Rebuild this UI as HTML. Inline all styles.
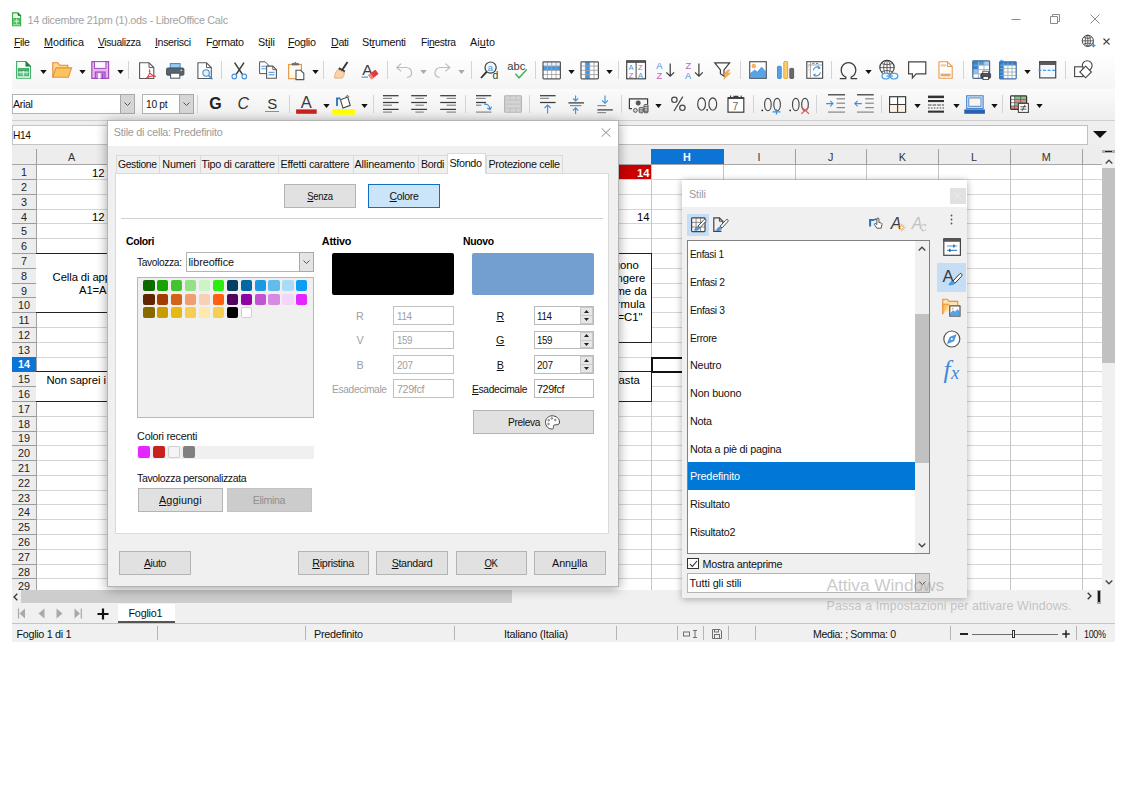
<!DOCTYPE html>
<html lang="it"><head><meta charset="utf-8"><title>LibreOffice Calc</title>
<style>
html,body{margin:0;padding:0;background:#fff;}
body{width:1122px;height:793px;position:relative;overflow:hidden;font-family:"Liberation Sans", sans-serif;font-size:10px;}
#root{position:absolute;left:0;top:0;width:1122px;height:793px;overflow:hidden;}
#root div,#root svg,#root span.t{position:absolute;box-sizing:border-box;}
span.t{white-space:pre;}
u{text-decoration:underline;text-underline-offset:1px;}
</style></head>
<body><div id="root">
<div style="left:12.00px;top:10.00px;width:1102.50px;height:42.00px;background:#fff;"></div>
<span class="t" id="t0" style="top:12.90px;font-size:10.8px;line-height:14px;color:#a3a3a3;letter-spacing:-0.279px;left:27.60px;">14 dicembre 21pm (1).ods - LibreOffice Calc</span>
<svg style="left:1010.00px;top:12.00px;" width="92.00" height="14.00" viewBox="0 0 92 14"><path d="M1.5 7.5h9" stroke="#8a8a8a" stroke-width="1" fill="none"/><path d="M40.5 4.5h7v7h-7z M42.5 4.5v-2h7v7h-2" stroke="#8a8a8a" stroke-width="1" fill="none"/><path d="M80.5 2.5l9 9 M89.5 2.5l-9 9" stroke="#8a8a8a" stroke-width="1" fill="none"/></svg>
<span class="t" id="t1" style="top:34.50px;font-size:10.8px;line-height:14px;color:#111;letter-spacing:-0.350px;left:14.00px;transform-origin:0 50%;transform:scaleX(0.9773);"><u>F</u>ile</span>
<span class="t" id="t2" style="top:34.50px;font-size:10.8px;line-height:14px;color:#111;letter-spacing:-0.031px;left:44.00px;"><u>M</u>odifica</span>
<span class="t" id="t3" style="top:34.50px;font-size:10.8px;line-height:14px;color:#111;letter-spacing:-0.350px;left:98.00px;transform-origin:0 50%;transform:scaleX(0.9498);"><u>V</u>isualizza</span>
<span class="t" id="t4" style="top:34.50px;font-size:10.8px;line-height:14px;color:#111;letter-spacing:-0.350px;left:155.00px;transform-origin:0 50%;transform:scaleX(0.9780);"><u>I</u>nserisci</span>
<span class="t" id="t5" style="top:34.50px;font-size:10.8px;line-height:14px;color:#111;letter-spacing:-0.350px;left:206.00px;transform-origin:0 50%;transform:scaleX(0.9965);">F<u>o</u>rmato</span>
<span class="t" id="t6" style="top:34.50px;font-size:10.8px;line-height:14px;color:#111;letter-spacing:-0.105px;left:258.00px;">St<u>i</u>li</span>
<span class="t" id="t7" style="top:34.50px;font-size:10.8px;line-height:14px;color:#111;letter-spacing:-0.284px;left:288.00px;"><u>F</u>oglio</span>
<span class="t" id="t8" style="top:34.50px;font-size:10.8px;line-height:14px;color:#111;letter-spacing:-0.350px;left:331.00px;transform-origin:0 50%;transform:scaleX(0.9907);"><u>D</u>ati</span>
<span class="t" id="t9" style="top:34.50px;font-size:10.8px;line-height:14px;color:#111;letter-spacing:-0.279px;left:362.00px;">St<u>r</u>umenti</span>
<span class="t" id="t10" style="top:34.50px;font-size:10.8px;line-height:14px;color:#111;letter-spacing:-0.350px;left:421.00px;transform-origin:0 50%;transform:scaleX(0.9568);">Fi<u>n</u>estra</span>
<span class="t" id="t11" style="top:34.50px;font-size:10.8px;line-height:14px;color:#111;letter-spacing:0.090px;left:470.00px;">Ai<u>u</u>to</span>
<div style="left:12.00px;top:52.00px;width:1102.50px;height:37.00px;background:linear-gradient(#ffffff,#f5f5f5);"></div>
<div style="left:12.00px;top:89.00px;width:1102.50px;height:31.50px;background:linear-gradient(#fbfbfb,#eeeeee);"></div>
<div style="left:12.00px;top:120.00px;width:1102.50px;height:1.00px;background:#cfcfcf;"></div>
<div style="left:12.00px;top:121.00px;width:1102.50px;height:27.50px;background:#efefef;"></div>
<div style="left:128.00px;top:61.00px;width:1.00px;height:18.00px;background:#d4d4d4;"></div>
<div style="left:221.00px;top:61.00px;width:1.00px;height:18.00px;background:#d4d4d4;"></div>
<div style="left:323.00px;top:61.00px;width:1.00px;height:18.00px;background:#d4d4d4;"></div>
<div style="left:387.00px;top:61.00px;width:1.00px;height:18.00px;background:#d4d4d4;"></div>
<div style="left:471.00px;top:61.00px;width:1.00px;height:18.00px;background:#d4d4d4;"></div>
<div style="left:535.00px;top:61.00px;width:1.00px;height:18.00px;background:#d4d4d4;"></div>
<div style="left:617.50px;top:61.00px;width:1.00px;height:18.00px;background:#d4d4d4;"></div>
<div style="left:739.50px;top:61.00px;width:1.00px;height:18.00px;background:#d4d4d4;"></div>
<div style="left:831.00px;top:61.00px;width:1.00px;height:18.00px;background:#d4d4d4;"></div>
<div style="left:962.50px;top:61.00px;width:1.00px;height:18.00px;background:#d4d4d4;"></div>
<div style="left:1065.00px;top:61.00px;width:1.00px;height:18.00px;background:#d4d4d4;"></div>
<div style="left:196.50px;top:95.00px;width:1.00px;height:18.00px;background:#d4d4d4;"></div>
<div style="left:289.00px;top:95.00px;width:1.00px;height:18.00px;background:#d4d4d4;"></div>
<div style="left:372.50px;top:95.00px;width:1.00px;height:18.00px;background:#d4d4d4;"></div>
<div style="left:464.70px;top:95.00px;width:1.00px;height:18.00px;background:#d4d4d4;"></div>
<div style="left:529.00px;top:95.00px;width:1.00px;height:18.00px;background:#d4d4d4;"></div>
<div style="left:621.30px;top:95.00px;width:1.00px;height:18.00px;background:#d4d4d4;"></div>
<div style="left:752.70px;top:95.00px;width:1.00px;height:18.00px;background:#d4d4d4;"></div>
<div style="left:816.30px;top:95.00px;width:1.00px;height:18.00px;background:#d4d4d4;"></div>
<div style="left:880.60px;top:95.00px;width:1.00px;height:18.00px;background:#d4d4d4;"></div>
<div style="left:1002.30px;top:95.00px;width:1.00px;height:18.00px;background:#d4d4d4;"></div>
<svg style="left:40.00px;top:69.70px;" width="7.00" height="4.00" viewBox="0 0 7 4"><path d="M0.3 0h6.4L3.5 4z" fill="#111"/></svg>
<svg style="left:78.50px;top:69.70px;" width="7.00" height="4.00" viewBox="0 0 7 4"><path d="M0.3 0h6.4L3.5 4z" fill="#111"/></svg>
<svg style="left:116.50px;top:69.70px;" width="7.00" height="4.00" viewBox="0 0 7 4"><path d="M0.3 0h6.4L3.5 4z" fill="#111"/></svg>
<svg style="left:311.50px;top:69.70px;" width="7.00" height="4.00" viewBox="0 0 7 4"><path d="M0.3 0h6.4L3.5 4z" fill="#111"/></svg>
<svg style="left:568.00px;top:69.70px;" width="7.00" height="4.00" viewBox="0 0 7 4"><path d="M0.3 0h6.4L3.5 4z" fill="#111"/></svg>
<svg style="left:605.90px;top:69.70px;" width="7.00" height="4.00" viewBox="0 0 7 4"><path d="M0.3 0h6.4L3.5 4z" fill="#111"/></svg>
<svg style="left:865.10px;top:69.70px;" width="7.00" height="4.00" viewBox="0 0 7 4"><path d="M0.3 0h6.4L3.5 4z" fill="#111"/></svg>
<svg style="left:1024.30px;top:69.70px;" width="7.00" height="4.00" viewBox="0 0 7 4"><path d="M0.3 0h6.4L3.5 4z" fill="#111"/></svg>
<svg style="left:420.20px;top:69.50px;" width="7.00" height="4.00" viewBox="0 0 7 4"><path d="M0.3 0h6.4L3.5 4z" fill="#a8a8a8"/></svg>
<svg style="left:458.20px;top:69.50px;" width="7.00" height="4.00" viewBox="0 0 7 4"><path d="M0.3 0h6.4L3.5 4z" fill="#a8a8a8"/></svg>
<svg style="left:322.50px;top:103.60px;" width="7.00" height="4.00" viewBox="0 0 7 4"><path d="M0.3 0h6.4L3.5 4z" fill="#111"/></svg>
<svg style="left:360.90px;top:103.60px;" width="7.00" height="4.00" viewBox="0 0 7 4"><path d="M0.3 0h6.4L3.5 4z" fill="#111"/></svg>
<svg style="left:655.20px;top:103.60px;" width="7.00" height="4.00" viewBox="0 0 7 4"><path d="M0.3 0h6.4L3.5 4z" fill="#111"/></svg>
<svg style="left:914.00px;top:103.60px;" width="7.00" height="4.00" viewBox="0 0 7 4"><path d="M0.3 0h6.4L3.5 4z" fill="#111"/></svg>
<svg style="left:952.50px;top:103.60px;" width="7.00" height="4.00" viewBox="0 0 7 4"><path d="M0.3 0h6.4L3.5 4z" fill="#111"/></svg>
<svg style="left:990.90px;top:103.60px;" width="7.00" height="4.00" viewBox="0 0 7 4"><path d="M0.3 0h6.4L3.5 4z" fill="#111"/></svg>
<svg style="left:1035.80px;top:103.60px;" width="7.00" height="4.00" viewBox="0 0 7 4"><path d="M0.3 0h6.4L3.5 4z" fill="#111"/></svg>
<div style="left:12.00px;top:93.50px;width:123.00px;height:20.00px;background:#fff;border:1px solid #b4b4b4;"></div>
<div style="left:120.00px;top:93.50px;width:15.00px;height:20.00px;background:#d6d6d6;border:1px solid #a8a8a8;"></div>
<svg style="left:124.00px;top:101.50px;" width="7.00" height="4.50" viewBox="0 0 7 4.5"><path d="M0.5 0.5L3.5 3.5L6.5 0.5" stroke="#555" stroke-width="1" fill="none"/></svg>
<div style="left:142.00px;top:93.50px;width:51.50px;height:20.00px;background:#fff;border:1px solid #b4b4b4;"></div>
<div style="left:178.50px;top:93.50px;width:15.00px;height:20.00px;background:#d6d6d6;border:1px solid #a8a8a8;"></div>
<svg style="left:182.50px;top:101.50px;" width="7.00" height="4.50" viewBox="0 0 7 4.5"><path d="M0.5 0.5L3.5 3.5L6.5 0.5" stroke="#555" stroke-width="1" fill="none"/></svg>
<span class="t" id="t12" style="top:96.60px;font-size:10.8px;line-height:14px;color:#111;letter-spacing:-0.350px;left:13.40px;transform-origin:0 50%;transform:scaleX(0.9896);">Arial</span>
<span class="t" id="t13" style="top:96.60px;font-size:10.8px;line-height:14px;color:#111;letter-spacing:-0.350px;left:146.00px;transform-origin:0 50%;transform:scaleX(0.9507);">10 pt</span>
<span class="t" id="t14" style="top:94.90px;font-size:16px;line-height:18px;color:#222;font-weight:bold;left:209.30px;">G</span>
<span class="t" id="t15" style="top:94.90px;font-size:16px;line-height:18px;color:#333;font-style:italic;left:237.40px;">C</span>
<span class="t" id="t16" style="top:94.50px;font-size:15px;line-height:18px;color:#333;left:267.20px;">S</span>
<div style="left:265.20px;top:110.70px;width:13.80px;height:1.20px;background:#5a9bd8;"></div>
<div style="left:12.00px;top:125.00px;width:96.00px;height:19.50px;background:#fff;border:1px solid #c4c4c4;"></div>
<span class="t" id="t17" style="top:127.50px;font-size:10.8px;line-height:14px;color:#111;letter-spacing:-0.350px;left:13.40px;transform-origin:0 50%;transform:scaleX(0.9418);">H14</span>
<div style="left:560.00px;top:125.00px;width:527.50px;height:19.50px;background:#fff;border:1px solid #c0c0c0;"></div>
<svg style="left:1093.00px;top:131.00px;" width="14.00" height="7.00" viewBox="0 0 14 7"><path d="M0 0h14L7 7z" fill="#111"/></svg>
<div style="left:12.00px;top:164.80px;width:1090.00px;height:425.20px;background:#fff;"></div>
<div style="left:12.00px;top:144.50px;width:1090.00px;height:20.30px;background:#ededed;"></div>
<div style="left:12.00px;top:164.80px;width:24.00px;height:425.20px;background:#ededed;"></div>
<div style="left:36.00px;top:179.09px;width:1066.00px;height:1.00px;background:#d6d6d6;"></div>
<div style="left:36.00px;top:193.88px;width:1066.00px;height:1.00px;background:#d6d6d6;"></div>
<div style="left:36.00px;top:208.67px;width:1066.00px;height:1.00px;background:#d6d6d6;"></div>
<div style="left:36.00px;top:223.46px;width:1066.00px;height:1.00px;background:#d6d6d6;"></div>
<div style="left:36.00px;top:238.25px;width:1066.00px;height:1.00px;background:#d6d6d6;"></div>
<div style="left:36.00px;top:253.04px;width:1066.00px;height:1.00px;background:#d6d6d6;"></div>
<div style="left:36.00px;top:267.83px;width:1066.00px;height:1.00px;background:#d6d6d6;"></div>
<div style="left:36.00px;top:282.62px;width:1066.00px;height:1.00px;background:#d6d6d6;"></div>
<div style="left:36.00px;top:297.41px;width:1066.00px;height:1.00px;background:#d6d6d6;"></div>
<div style="left:36.00px;top:312.20px;width:1066.00px;height:1.00px;background:#d6d6d6;"></div>
<div style="left:36.00px;top:326.99px;width:1066.00px;height:1.00px;background:#d6d6d6;"></div>
<div style="left:36.00px;top:341.78px;width:1066.00px;height:1.00px;background:#d6d6d6;"></div>
<div style="left:36.00px;top:356.57px;width:1066.00px;height:1.00px;background:#d6d6d6;"></div>
<div style="left:36.00px;top:371.36px;width:1066.00px;height:1.00px;background:#d6d6d6;"></div>
<div style="left:36.00px;top:386.15px;width:1066.00px;height:1.00px;background:#d6d6d6;"></div>
<div style="left:36.00px;top:400.94px;width:1066.00px;height:1.00px;background:#d6d6d6;"></div>
<div style="left:36.00px;top:415.73px;width:1066.00px;height:1.00px;background:#d6d6d6;"></div>
<div style="left:36.00px;top:430.52px;width:1066.00px;height:1.00px;background:#d6d6d6;"></div>
<div style="left:36.00px;top:445.31px;width:1066.00px;height:1.00px;background:#d6d6d6;"></div>
<div style="left:36.00px;top:460.10px;width:1066.00px;height:1.00px;background:#d6d6d6;"></div>
<div style="left:36.00px;top:474.89px;width:1066.00px;height:1.00px;background:#d6d6d6;"></div>
<div style="left:36.00px;top:489.68px;width:1066.00px;height:1.00px;background:#d6d6d6;"></div>
<div style="left:36.00px;top:504.47px;width:1066.00px;height:1.00px;background:#d6d6d6;"></div>
<div style="left:36.00px;top:519.26px;width:1066.00px;height:1.00px;background:#d6d6d6;"></div>
<div style="left:36.00px;top:534.05px;width:1066.00px;height:1.00px;background:#d6d6d6;"></div>
<div style="left:36.00px;top:548.84px;width:1066.00px;height:1.00px;background:#d6d6d6;"></div>
<div style="left:36.00px;top:563.63px;width:1066.00px;height:1.00px;background:#d6d6d6;"></div>
<div style="left:36.00px;top:578.42px;width:1066.00px;height:1.00px;background:#d6d6d6;"></div>
<div style="left:650.50px;top:164.80px;width:1.00px;height:425.20px;background:#c6c6c6;"></div>
<div style="left:722.50px;top:164.80px;width:1.00px;height:425.20px;background:#c6c6c6;"></div>
<div style="left:794.50px;top:164.80px;width:1.00px;height:425.20px;background:#c6c6c6;"></div>
<div style="left:866.00px;top:164.80px;width:1.00px;height:425.20px;background:#c6c6c6;"></div>
<div style="left:937.50px;top:164.80px;width:1.00px;height:425.20px;background:#c6c6c6;"></div>
<div style="left:1009.50px;top:164.80px;width:1.00px;height:425.20px;background:#c6c6c6;"></div>
<div style="left:1082.00px;top:164.80px;width:1.00px;height:425.20px;background:#c6c6c6;"></div>
<div style="left:12.00px;top:163.60px;width:1090.00px;height:1.70px;background:#a6a6a6;"></div>
<div style="left:35.50px;top:148.50px;width:1.00px;height:441.50px;background:#a0a0a0;"></div>
<div style="left:12.00px;top:179.09px;width:24.00px;height:1.00px;background:#9c9c9c;"></div>
<div style="left:12.00px;top:193.88px;width:24.00px;height:1.00px;background:#9c9c9c;"></div>
<div style="left:12.00px;top:208.67px;width:24.00px;height:1.00px;background:#9c9c9c;"></div>
<div style="left:12.00px;top:223.46px;width:24.00px;height:1.00px;background:#9c9c9c;"></div>
<div style="left:12.00px;top:238.25px;width:24.00px;height:1.00px;background:#9c9c9c;"></div>
<div style="left:12.00px;top:253.04px;width:24.00px;height:1.00px;background:#9c9c9c;"></div>
<div style="left:12.00px;top:267.83px;width:24.00px;height:1.00px;background:#9c9c9c;"></div>
<div style="left:12.00px;top:282.62px;width:24.00px;height:1.00px;background:#9c9c9c;"></div>
<div style="left:12.00px;top:297.41px;width:24.00px;height:1.00px;background:#9c9c9c;"></div>
<div style="left:12.00px;top:312.20px;width:24.00px;height:1.00px;background:#9c9c9c;"></div>
<div style="left:12.00px;top:326.99px;width:24.00px;height:1.00px;background:#9c9c9c;"></div>
<div style="left:12.00px;top:341.78px;width:24.00px;height:1.00px;background:#9c9c9c;"></div>
<div style="left:12.00px;top:356.57px;width:24.00px;height:1.00px;background:#9c9c9c;"></div>
<div style="left:12.00px;top:371.36px;width:24.00px;height:1.00px;background:#9c9c9c;"></div>
<div style="left:12.00px;top:386.15px;width:24.00px;height:1.00px;background:#9c9c9c;"></div>
<div style="left:12.00px;top:400.94px;width:24.00px;height:1.00px;background:#9c9c9c;"></div>
<div style="left:12.00px;top:415.73px;width:24.00px;height:1.00px;background:#9c9c9c;"></div>
<div style="left:12.00px;top:430.52px;width:24.00px;height:1.00px;background:#9c9c9c;"></div>
<div style="left:12.00px;top:445.31px;width:24.00px;height:1.00px;background:#9c9c9c;"></div>
<div style="left:12.00px;top:460.10px;width:24.00px;height:1.00px;background:#9c9c9c;"></div>
<div style="left:12.00px;top:474.89px;width:24.00px;height:1.00px;background:#9c9c9c;"></div>
<div style="left:12.00px;top:489.68px;width:24.00px;height:1.00px;background:#9c9c9c;"></div>
<div style="left:12.00px;top:504.47px;width:24.00px;height:1.00px;background:#9c9c9c;"></div>
<div style="left:12.00px;top:519.26px;width:24.00px;height:1.00px;background:#9c9c9c;"></div>
<div style="left:12.00px;top:534.05px;width:24.00px;height:1.00px;background:#9c9c9c;"></div>
<div style="left:12.00px;top:548.84px;width:24.00px;height:1.00px;background:#9c9c9c;"></div>
<div style="left:12.00px;top:563.63px;width:24.00px;height:1.00px;background:#9c9c9c;"></div>
<div style="left:12.00px;top:578.42px;width:24.00px;height:1.00px;background:#9c9c9c;"></div>
<div style="left:650.50px;top:148.50px;width:1.00px;height:16.30px;background:#a0a0a0;"></div>
<div style="left:722.50px;top:148.50px;width:1.00px;height:16.30px;background:#a0a0a0;"></div>
<div style="left:794.50px;top:148.50px;width:1.00px;height:16.30px;background:#a0a0a0;"></div>
<div style="left:866.00px;top:148.50px;width:1.00px;height:16.30px;background:#a0a0a0;"></div>
<div style="left:937.50px;top:148.50px;width:1.00px;height:16.30px;background:#a0a0a0;"></div>
<div style="left:1009.50px;top:148.50px;width:1.00px;height:16.30px;background:#a0a0a0;"></div>
<div style="left:1082.00px;top:148.50px;width:1.00px;height:16.30px;background:#a0a0a0;"></div>
<div style="left:107.00px;top:148.50px;width:1.00px;height:16.30px;background:#a0a0a0;"></div>
<div style="left:651.00px;top:148.50px;width:72.50px;height:15.80px;background:#0b74d4;"></div>
<span class="t" id="t18" style="top:150.00px;font-size:10.8px;line-height:14px;color:#fff;font-weight:bold;left:687.00px;transform:translateX(-50%);">H</span>
<span class="t" id="t19" style="top:150.00px;font-size:10.8px;line-height:14px;color:#333;left:759.00px;transform:translateX(-50%);">I</span>
<span class="t" id="t20" style="top:150.00px;font-size:10.8px;line-height:14px;color:#333;left:830.75px;transform:translateX(-50%);">J</span>
<span class="t" id="t21" style="top:150.00px;font-size:10.8px;line-height:14px;color:#333;left:902.25px;transform:translateX(-50%);">K</span>
<span class="t" id="t22" style="top:150.00px;font-size:10.8px;line-height:14px;color:#333;left:974.00px;transform:translateX(-50%);">L</span>
<span class="t" id="t23" style="top:150.00px;font-size:10.8px;line-height:14px;color:#333;left:1046.25px;transform:translateX(-50%);">M</span>
<span class="t" id="t24" style="top:150.00px;font-size:10.8px;line-height:14px;color:#333;left:71.50px;transform:translateX(-50%);">A</span>
<div style="left:12.00px;top:357.07px;width:23.50px;height:14.79px;background:#0b74d4;"></div>
<span class="t" id="t25" style="top:165.20px;font-size:10.8px;line-height:14px;color:#222;left:24.00px;transform:translateX(-50%);">1</span>
<span class="t" id="t26" style="top:179.99px;font-size:10.8px;line-height:14px;color:#222;left:24.00px;transform:translateX(-50%);">2</span>
<span class="t" id="t27" style="top:194.78px;font-size:10.8px;line-height:14px;color:#222;left:24.00px;transform:translateX(-50%);">3</span>
<span class="t" id="t28" style="top:209.57px;font-size:10.8px;line-height:14px;color:#222;left:24.00px;transform:translateX(-50%);">4</span>
<span class="t" id="t29" style="top:224.36px;font-size:10.8px;line-height:14px;color:#222;left:24.00px;transform:translateX(-50%);">5</span>
<span class="t" id="t30" style="top:239.15px;font-size:10.8px;line-height:14px;color:#222;left:24.00px;transform:translateX(-50%);">6</span>
<span class="t" id="t31" style="top:253.94px;font-size:10.8px;line-height:14px;color:#222;left:24.00px;transform:translateX(-50%);">7</span>
<span class="t" id="t32" style="top:268.73px;font-size:10.8px;line-height:14px;color:#222;left:24.00px;transform:translateX(-50%);">8</span>
<span class="t" id="t33" style="top:283.51px;font-size:10.8px;line-height:14px;color:#222;left:24.00px;transform:translateX(-50%);">9</span>
<span class="t" id="t34" style="top:298.30px;font-size:10.8px;line-height:14px;color:#222;left:24.00px;transform:translateX(-50%);">10</span>
<span class="t" id="t35" style="top:313.09px;font-size:10.8px;line-height:14px;color:#222;left:24.00px;transform:translateX(-50%);">11</span>
<span class="t" id="t36" style="top:327.88px;font-size:10.8px;line-height:14px;color:#222;left:24.00px;transform:translateX(-50%);">12</span>
<span class="t" id="t37" style="top:342.67px;font-size:10.8px;line-height:14px;color:#222;left:24.00px;transform:translateX(-50%);">13</span>
<span class="t" id="t38" style="top:357.46px;font-size:10.8px;line-height:14px;color:#fff;font-weight:bold;left:24.00px;transform:translateX(-50%);">14</span>
<span class="t" id="t39" style="top:372.25px;font-size:10.8px;line-height:14px;color:#222;left:24.00px;transform:translateX(-50%);">15</span>
<span class="t" id="t40" style="top:387.04px;font-size:10.8px;line-height:14px;color:#222;left:24.00px;transform:translateX(-50%);">16</span>
<span class="t" id="t41" style="top:401.83px;font-size:10.8px;line-height:14px;color:#222;left:24.00px;transform:translateX(-50%);">17</span>
<span class="t" id="t42" style="top:416.62px;font-size:10.8px;line-height:14px;color:#222;left:24.00px;transform:translateX(-50%);">18</span>
<span class="t" id="t43" style="top:431.41px;font-size:10.8px;line-height:14px;color:#222;left:24.00px;transform:translateX(-50%);">19</span>
<span class="t" id="t44" style="top:446.20px;font-size:10.8px;line-height:14px;color:#222;left:24.00px;transform:translateX(-50%);">20</span>
<span class="t" id="t45" style="top:460.99px;font-size:10.8px;line-height:14px;color:#222;left:24.00px;transform:translateX(-50%);">21</span>
<span class="t" id="t46" style="top:475.78px;font-size:10.8px;line-height:14px;color:#222;left:24.00px;transform:translateX(-50%);">22</span>
<span class="t" id="t47" style="top:490.57px;font-size:10.8px;line-height:14px;color:#222;left:24.00px;transform:translateX(-50%);">23</span>
<span class="t" id="t48" style="top:505.37px;font-size:10.8px;line-height:14px;color:#222;left:24.00px;transform:translateX(-50%);">24</span>
<span class="t" id="t49" style="top:520.15px;font-size:10.8px;line-height:14px;color:#222;left:24.00px;transform:translateX(-50%);">25</span>
<span class="t" id="t50" style="top:534.94px;font-size:10.8px;line-height:14px;color:#222;left:24.00px;transform:translateX(-50%);">26</span>
<span class="t" id="t51" style="top:549.73px;font-size:10.8px;line-height:14px;color:#222;left:24.00px;transform:translateX(-50%);">27</span>
<span class="t" id="t52" style="top:564.52px;font-size:10.8px;line-height:14px;color:#222;left:24.00px;transform:translateX(-50%);">28</span>
<span class="t" id="t53" style="top:579.32px;font-size:10.8px;line-height:14px;color:#222;left:24.00px;transform:translateX(-50%);">29</span>
<span class="t" id="t54" style="top:165.80px;font-size:11.3px;line-height:14px;color:#000;right:1017.50px;">12</span>
<span class="t" id="t55" style="top:210.17px;font-size:11.3px;line-height:14px;color:#000;right:1017.50px;">12</span>
<div style="left:36.00px;top:253.54px;width:80.00px;height:59.16px;background:#fff;"></div>
<div style="left:36.00px;top:371.86px;width:80.00px;height:29.58px;background:#fff;"></div>
<div style="left:36.00px;top:253.04px;width:80.00px;height:1.00px;background:#222;"></div>
<div style="left:36.00px;top:312.20px;width:80.00px;height:1.00px;background:#222;"></div>
<span class="t" id="t56" style="top:269.50px;font-size:11.3px;line-height:14px;color:#000;letter-spacing:-0.107px;left:52.60px;">Cella di app</span>
<span class="t" id="t57" style="top:282.70px;font-size:11.3px;line-height:14px;color:#000;letter-spacing:-0.151px;left:79.00px;">A1=A</span>
<span class="t" id="t58" style="top:372.70px;font-size:11.3px;line-height:14px;color:#000;letter-spacing:-0.071px;left:46.50px;">Non saprei i</span>
<div style="left:36.00px;top:371.36px;width:80.00px;height:1.00px;background:#222;"></div>
<div style="left:36.00px;top:400.94px;width:80.00px;height:1.00px;background:#222;"></div>
<div style="left:600.00px;top:165.30px;width:50.50px;height:13.79px;background:#cc0000;"></div>
<span class="t" id="t59" style="top:165.80px;font-size:11.3px;line-height:14px;color:#fff;font-weight:bold;right:472.50px;">14</span>
<span class="t" id="t60" style="top:210.17px;font-size:11.3px;line-height:14px;color:#000;right:472.50px;">14</span>
<div style="left:560.00px;top:253.04px;width:91.50px;height:89.74px;background:#fff;border:1px solid #222;border-left:none;"></div>
<span class="t" id="t61" style="top:258.40px;font-size:11.3px;line-height:14px;color:#000;right:483.10px;">gono</span>
<span class="t" id="t62" style="top:271.30px;font-size:11.3px;line-height:14px;color:#000;right:476.60px;">ngere</span>
<span class="t" id="t63" style="top:284.20px;font-size:11.3px;line-height:14px;color:#000;right:475.20px;">me da</span>
<span class="t" id="t64" style="top:297.30px;font-size:11.3px;line-height:14px;color:#000;right:476.90px;">rmula</span>
<span class="t" id="t65" style="top:310.40px;font-size:11.3px;line-height:14px;color:#000;right:479.50px;">=C1"</span>
<div style="left:560.00px;top:371.36px;width:91.50px;height:30.58px;background:#fff;border:1px solid #222;border-left:none;"></div>
<span class="t" id="t66" style="top:373.20px;font-size:11.3px;line-height:14px;color:#000;right:482.20px;">asta</span>
<div style="left:650.50px;top:356.60px;width:73.70px;height:16.00px;border:2px solid #111;"></div>
<div style="left:1102.00px;top:144.50px;width:12.50px;height:445.50px;background:#f0f0f0;"></div>
<div style="left:1102.00px;top:149.50px;width:12.50px;height:3.50px;background:#b0b0b0;"></div>
<div style="left:1105.00px;top:150.70px;width:6.50px;height:1.20px;background:#222;"></div>
<svg style="left:1104.50px;top:158.50px;" width="8.00" height="5.00" viewBox="0 0 8 5"><path d="M0.7 4.5L4 1.2L7.3 4.5" stroke="#444" stroke-width="1.3" fill="none"/></svg>
<div style="left:1102.00px;top:168.00px;width:12.50px;height:195.00px;background:#c1c1c1;"></div>
<svg style="left:1104.50px;top:579.50px;" width="8.00" height="5.00" viewBox="0 0 8 5"><path d="M0.7 0.5L4 3.8L7.3 0.5" stroke="#444" stroke-width="1.3" fill="none"/></svg>
<div style="left:12.00px;top:590.00px;width:1102.50px;height:33.50px;background:#f0f0f0;"></div>
<div style="left:21.00px;top:590.00px;width:491.00px;height:13.00px;background:#cdcdcd;"></div>
<svg style="left:12.50px;top:593.00px;" width="5.00" height="8.00" viewBox="0 0 5 8"><path d="M4.3 0.7L1 4L4.3 7.3" stroke="#333" stroke-width="1.3" fill="none"/></svg>
<svg style="left:1087.00px;top:592.00px;" width="5.00" height="8.00" viewBox="0 0 5 8"><path d="M0.7 0.7L4 4L0.7 7.3" stroke="#333" stroke-width="1.3" fill="none"/></svg>
<div style="left:1096.80px;top:589.60px;width:4.60px;height:14.00px;background:#a8a8a8;"></div>
<div style="left:1098.20px;top:591.00px;width:1.90px;height:11.20px;background:#1a1a1a;"></div>
<svg style="left:17.00px;top:608.00px;" width="66.00" height="11.00" viewBox="0 0 66 11"><path d="M1.5 0.5v10" stroke="#a9a9a9" stroke-width="1.2"/><path d="M8 0.5v10L2.5 5.5z" fill="#a9a9a9"/><path d="M27.5 0.5v10L21.5 5.5z" fill="#a9a9a9"/><path d="M39.5 0.5v10L45.5 5.5z" fill="#a9a9a9"/><path d="M57.5 0.5v10L63 5.5z" fill="#a9a9a9"/><path d="M64.3 0.5v10" stroke="#a9a9a9" stroke-width="1.2"/></svg>
<svg style="left:96.50px;top:608.00px;" width="12.00" height="12.00" viewBox="0 0 12 12"><path d="M6 0.5v11M0.5 6h11" stroke="#111" stroke-width="2.2"/></svg>
<div style="left:118.00px;top:603.50px;width:56.50px;height:19.50px;background:#fff;"></div>
<div style="left:118.00px;top:621.00px;width:56.50px;height:2.00px;background:#555;"></div>
<span class="t" id="t67" style="top:605.80px;font-size:10.8px;line-height:14px;color:#111;letter-spacing:-0.237px;left:128.50px;">Foglio1</span>
<div style="left:12.00px;top:623.00px;width:1102.50px;height:18.50px;background:#f0f0f0;"></div>
<div style="left:12.00px;top:623.00px;width:1102.50px;height:1.00px;background:#c4c4c4;"></div>
<div style="left:157.00px;top:626.00px;width:1.00px;height:14.00px;background:#b5b5b5;"></div>
<div style="left:305.00px;top:626.00px;width:1.00px;height:14.00px;background:#b5b5b5;"></div>
<div style="left:453.80px;top:626.00px;width:1.00px;height:14.00px;background:#b5b5b5;"></div>
<div style="left:616.00px;top:626.00px;width:1.00px;height:14.00px;background:#b5b5b5;"></div>
<div style="left:676.80px;top:626.00px;width:1.00px;height:14.00px;background:#b5b5b5;"></div>
<div style="left:703.00px;top:626.00px;width:1.00px;height:14.00px;background:#b5b5b5;"></div>
<div style="left:728.00px;top:626.00px;width:1.00px;height:14.00px;background:#b5b5b5;"></div>
<div style="left:754.50px;top:626.00px;width:1.00px;height:14.00px;background:#b5b5b5;"></div>
<div style="left:950.00px;top:626.00px;width:1.00px;height:14.00px;background:#b5b5b5;"></div>
<div style="left:1075.60px;top:626.00px;width:1.00px;height:14.00px;background:#b5b5b5;"></div>
<span class="t" id="t68" style="top:626.80px;font-size:10.8px;line-height:14px;color:#111;letter-spacing:-0.319px;left:16.50px;">Foglio 1 di 1</span>
<span class="t" id="t69" style="top:626.80px;font-size:10.8px;line-height:14px;color:#111;letter-spacing:-0.263px;left:314.00px;">Predefinito</span>
<span class="t" id="t70" style="top:626.80px;font-size:10.8px;line-height:14px;color:#111;letter-spacing:-0.239px;left:504.00px;">Italiano (Italia)</span>
<span class="t" id="t71" style="top:626.80px;font-size:10.8px;line-height:14px;color:#111;letter-spacing:-0.350px;left:812.70px;transform-origin:0 50%;transform:scaleX(0.9764);">Media: ; Somma: 0</span>
<span class="t" id="t72" style="top:626.80px;font-size:10.8px;line-height:14px;color:#111;letter-spacing:-0.350px;left:1084.00px;transform-origin:0 50%;transform:scaleX(0.8278);">100%</span>
<svg style="left:683.00px;top:629.00px;" width="16.00" height="10.00" viewBox="0 0 16 10"><rect x="0.5" y="3" width="6" height="4" fill="none" stroke="#6f6f6f"/><path d="M10 1.5h4M12 1.5v7M10 8.5h4" stroke="#6f6f6f" stroke-width="1" fill="none"/></svg>
<svg style="left:712.00px;top:629.00px;" width="10.00" height="10.00" viewBox="0 0 10 10"><path d="M0.5 0.5h7.5l1.5 1.5v7.5h-9z" fill="none" stroke="#6f6f6f"/><rect x="2.5" y="5.5" width="5" height="4" fill="none" stroke="#6f6f6f"/><rect x="2.5" y="0.5" width="4" height="2.5" fill="none" stroke="#6f6f6f"/></svg>
<div style="left:959.60px;top:633.20px;width:8.00px;height:2.00px;background:#222;"></div>
<div style="left:972.00px;top:633.50px;width:85.50px;height:1.50px;background:#6e6e6e;"></div>
<div style="left:1011.50px;top:630.00px;width:3.00px;height:8.00px;background:#f0f0f0;border:1px solid #333;"></div>
<svg style="left:1061.50px;top:630.00px;" width="8.00" height="8.00" viewBox="0 0 8 8"><path d="M4 0.3v7.4M0.3 4h7.4" stroke="#222" stroke-width="1.5"/></svg>
<div style="left:682.00px;top:180.00px;width:285.00px;height:417.50px;background:#f0f0f0;box-shadow:0 1px 7px rgba(0,0,0,0.33);"></div>
<div style="left:682.00px;top:180.00px;width:285.00px;height:26.50px;background:#fff;"></div>
<span class="t" id="t73" style="top:186.70px;font-size:10.8px;line-height:14px;color:#9a9a9a;letter-spacing:-0.102px;left:689.00px;">Stili</span>
<div style="left:949.80px;top:187.50px;width:16.00px;height:16.00px;background:#e1e1e1;"></div>
<svg style="left:954.30px;top:192.00px;" width="7.00" height="7.00" viewBox="0 0 7 7"><path d="M0.5 0.5l6 6M6.5 0.5l-6 6" stroke="#ececec" stroke-width="1"/></svg>
<div style="left:687.00px;top:213.50px;width:22.00px;height:22.00px;background:#c5def5;"></div>
<div style="left:687.00px;top:239.50px;width:242.50px;height:314.00px;background:#fff;border:1px solid #828282;"></div>
<div style="left:914.50px;top:240.50px;width:14.00px;height:312.00px;background:#f0f0f0;"></div>
<div style="left:914.50px;top:313.50px;width:14.00px;height:149.00px;background:#c1c1c1;"></div>
<svg style="left:917.50px;top:245.50px;" width="8.00" height="5.00" viewBox="0 0 8 5"><path d="M0.7 4.5L4 1.2L7.3 4.5" stroke="#444" stroke-width="1.3" fill="none"/></svg>
<svg style="left:917.50px;top:543.00px;" width="8.00" height="5.00" viewBox="0 0 8 5"><path d="M0.7 0.5L4 3.8L7.3 0.5" stroke="#444" stroke-width="1.3" fill="none"/></svg>
<div style="left:688.00px;top:462.30px;width:226.50px;height:28.00px;background:#0078d7;"></div>
<span class="t" id="t74" style="top:247.20px;font-size:10.8px;line-height:14px;color:#111;letter-spacing:-0.350px;left:690.00px;transform-origin:0 50%;transform:scaleX(0.9298);">Enfasi 1</span>
<span class="t" id="t75" style="top:274.97px;font-size:10.8px;line-height:14px;color:#111;letter-spacing:-0.350px;left:690.00px;transform-origin:0 50%;transform:scaleX(0.9572);">Enfasi 2</span>
<span class="t" id="t76" style="top:302.74px;font-size:10.8px;line-height:14px;color:#111;letter-spacing:-0.350px;left:690.00px;transform-origin:0 50%;transform:scaleX(0.9572);">Enfasi 3</span>
<span class="t" id="t77" style="top:330.51px;font-size:10.8px;line-height:14px;color:#111;letter-spacing:-0.350px;left:690.00px;transform-origin:0 50%;transform:scaleX(0.9558);">Errore</span>
<span class="t" id="t78" style="top:358.28px;font-size:10.8px;line-height:14px;color:#111;letter-spacing:-0.184px;left:690.00px;">Neutro</span>
<span class="t" id="t79" style="top:386.05px;font-size:10.8px;line-height:14px;color:#111;letter-spacing:-0.168px;left:690.00px;">Non buono</span>
<span class="t" id="t80" style="top:413.82px;font-size:10.8px;line-height:14px;color:#111;letter-spacing:-0.271px;left:690.00px;">Nota</span>
<span class="t" id="t81" style="top:441.59px;font-size:10.8px;line-height:14px;color:#111;letter-spacing:-0.239px;left:690.00px;">Nota a piè di pagina</span>
<span class="t" id="t82" style="top:469.36px;font-size:10.8px;line-height:14px;color:#fff;letter-spacing:-0.163px;left:690.00px;">Predefinito</span>
<span class="t" id="t83" style="top:497.13px;font-size:10.8px;line-height:14px;color:#111;letter-spacing:-0.252px;left:690.00px;">Risultato</span>
<span class="t" id="t84" style="top:524.90px;font-size:10.8px;line-height:14px;color:#111;letter-spacing:-0.280px;left:690.00px;">Risultato2</span>
<div style="left:687.00px;top:557.50px;width:11.50px;height:11.50px;background:#fff;border:1px solid #333;"></div>
<svg style="left:688.50px;top:559.50px;" width="9.00" height="8.00" viewBox="0 0 9 8"><path d="M1 4l2.3 2.5L8 1" stroke="#222" stroke-width="1.1" fill="none"/></svg>
<span class="t" id="t85" style="top:556.80px;font-size:10.8px;line-height:14px;color:#111;letter-spacing:-0.268px;left:702.60px;">Mostra anteprime</span>
<div style="left:687.00px;top:573.00px;width:242.50px;height:19.50px;background:#fff;border:1px solid #b4b4b4;"></div>
<div style="left:914.50px;top:573.00px;width:15.00px;height:19.50px;background:#d6d6d6;border:1px solid #a8a8a8;"></div>
<svg style="left:918.50px;top:580.75px;" width="7.00" height="4.50" viewBox="0 0 7 4.5"><path d="M0.5 0.5L3.5 3.5L6.5 0.5" stroke="#555" stroke-width="1" fill="none"/></svg>
<span class="t" id="t86" style="top:575.60px;font-size:10.8px;line-height:14px;color:#111;letter-spacing:-0.071px;left:689.50px;">Tutti gli stili</span>
<div style="left:936.50px;top:262.80px;width:29.00px;height:29.00px;background:#c5def5;"></div>
<svg style="left:949.50px;top:213.50px;" width="3.00" height="11.00" viewBox="0 0 3 11"><circle cx="1.5" cy="1.5" r="0.9" fill="#555"/><circle cx="1.5" cy="5.5" r="0.9" fill="#555"/><circle cx="1.5" cy="9.5" r="0.9" fill="#555"/></svg>
<div style="left:107.00px;top:119.50px;width:511.50px;height:467.50px;background:#f0f0f0;box-shadow:0 2px 11px rgba(0,0,0,0.36);border:1px solid #b4b4b4;"></div>
<div style="left:108.00px;top:120.50px;width:509.50px;height:25.50px;background:#fff;"></div>
<span class="t" id="t87" style="top:125.20px;font-size:10.8px;line-height:14px;color:#9a9a9a;letter-spacing:-0.240px;left:113.80px;">Stile di cella: Predefinito</span>
<svg style="left:600.50px;top:127.50px;" width="10.00" height="9.00" viewBox="0 0 10 9"><path d="M0.5 0.3l9 8.4M9.5 0.3l-9 8.4" stroke="#8a8a8a" stroke-width="1"/></svg>
<div style="left:115.00px;top:173.00px;width:493.50px;height:361.00px;background:#fff;border:1px solid #dadada;"></div>
<div style="left:115.50px;top:154.50px;width:44.50px;height:19.00px;background:#f0f0f0;border:1px solid #dadada;"></div>
<span class="t" id="t88" style="top:157.00px;font-size:10.8px;line-height:14px;color:#111;letter-spacing:-0.350px;left:117.50px;transform-origin:0 50%;transform:scaleX(0.9566);">Gestione</span>
<div style="left:159.00px;top:154.50px;width:41.50px;height:19.00px;background:#f0f0f0;border:1px solid #dadada;"></div>
<span class="t" id="t89" style="top:157.00px;font-size:10.8px;line-height:14px;color:#111;letter-spacing:-0.219px;left:162.30px;">Numeri</span>
<div style="left:199.50px;top:154.50px;width:79.50px;height:19.00px;background:#f0f0f0;border:1px solid #dadada;"></div>
<span class="t" id="t90" style="top:157.00px;font-size:10.8px;line-height:14px;color:#111;letter-spacing:-0.258px;left:201.50px;">Tipo di carattere</span>
<div style="left:278.00px;top:154.50px;width:75.50px;height:19.00px;background:#f0f0f0;border:1px solid #dadada;"></div>
<span class="t" id="t91" style="top:157.00px;font-size:10.8px;line-height:14px;color:#111;letter-spacing:-0.252px;left:280.50px;">Effetti carattere</span>
<div style="left:352.50px;top:154.50px;width:66.50px;height:19.00px;background:#f0f0f0;border:1px solid #dadada;"></div>
<span class="t" id="t92" style="top:157.00px;font-size:10.8px;line-height:14px;color:#111;letter-spacing:-0.175px;left:354.50px;">Allineamento</span>
<div style="left:418.00px;top:154.50px;width:30.00px;height:19.00px;background:#f0f0f0;border:1px solid #dadada;"></div>
<span class="t" id="t93" style="top:157.00px;font-size:10.8px;line-height:14px;color:#111;letter-spacing:-0.350px;left:420.50px;transform-origin:0 50%;transform:scaleX(0.9866);">Bordi</span>
<div style="left:447.00px;top:152.50px;width:38.80px;height:21.50px;background:#fff;border:1px solid #dadada;border-bottom:none;"></div>
<span class="t" id="t94" style="top:156.00px;font-size:10.8px;line-height:14px;color:#111;letter-spacing:-0.347px;left:449.50px;">Sfondo</span>
<div style="left:485.80px;top:154.50px;width:77.70px;height:19.00px;background:#f0f0f0;border:1px solid #dadada;"></div>
<span class="t" id="t95" style="top:157.00px;font-size:10.8px;line-height:14px;color:#111;letter-spacing:-0.350px;left:488.50px;">Protezione celle</span>
<div style="left:284.20px;top:184.00px;width:71.60px;height:23.60px;background:#e1e1e1;border:1px solid #b4b4b4;"></div>
<span class="t" id="t96" style="top:189.20px;font-size:10.8px;line-height:14px;color:#111;letter-spacing:-0.350px;left:320.00px;transform:translateX(-50%) scaleX(0.8828);margin-left:-0.17px;"><u>S</u>enza</span>
<div style="left:368.20px;top:184.00px;width:71.60px;height:23.60px;background:#cce4f7;border:1px solid #0f6fc6;"></div>
<span class="t" id="t97" style="top:189.20px;font-size:10.8px;line-height:14px;color:#111;letter-spacing:-0.350px;left:404.00px;transform:translateX(-50%) scaleX(0.9708);margin-left:-0.17px;"><u>C</u>olore</span>
<div style="left:121.00px;top:217.50px;width:481.50px;height:1.00px;background:#d0d0d0;"></div>
<span class="t" id="t98" style="top:233.60px;font-size:10.8px;line-height:14px;color:#000;font-weight:bold;letter-spacing:-0.350px;left:126.40px;transform-origin:0 50%;transform:scaleX(0.9676);">Colori</span>
<span class="t" id="t99" style="top:233.60px;font-size:10.8px;line-height:14px;color:#000;font-weight:bold;letter-spacing:-0.219px;left:321.80px;">Attivo</span>
<span class="t" id="t100" style="top:233.60px;font-size:10.8px;line-height:14px;color:#000;font-weight:bold;letter-spacing:-0.350px;left:462.50px;transform-origin:0 50%;transform:scaleX(0.9629);">Nuovo</span>
<span class="t" id="t101" style="top:254.80px;font-size:10.8px;line-height:14px;color:#111;letter-spacing:-0.350px;left:137.20px;transform-origin:0 50%;transform:scaleX(0.9401);">Tavolozza:</span>
<div style="left:186.20px;top:252.20px;width:127.30px;height:19.60px;background:#fff;border:1px solid #b4b4b4;"></div>
<div style="left:298.50px;top:252.20px;width:15.00px;height:19.60px;background:#e4e4e4;border:1px solid #a8a8a8;"></div>
<svg style="left:302.50px;top:260.00px;" width="7.00" height="4.50" viewBox="0 0 7 4.5"><path d="M0.5 0.5L3.5 3.5L6.5 0.5" stroke="#555" stroke-width="1" fill="none"/></svg>
<span class="t" id="t102" style="top:254.80px;font-size:10.8px;line-height:14px;color:#111;letter-spacing:-0.052px;left:188.50px;">libreoffice</span>
<div style="left:137.00px;top:277.20px;width:176.50px;height:141.00px;background:#f0f0f0;border:1px solid #b8b8b8;"></div>
<div style="left:143.30px;top:279.70px;width:11.30px;height:11.00px;background:#106802;border-radius:2px;"></div>
<div style="left:157.20px;top:279.70px;width:11.30px;height:11.00px;background:#18a303;border-radius:2px;"></div>
<div style="left:171.10px;top:279.70px;width:11.30px;height:11.00px;background:#43c330;border-radius:2px;"></div>
<div style="left:185.00px;top:279.70px;width:11.30px;height:11.00px;background:#92e285;border-radius:2px;"></div>
<div style="left:198.90px;top:279.70px;width:11.30px;height:11.00px;background:#ccf4c6;border-radius:2px;"></div>
<div style="left:212.80px;top:279.70px;width:11.30px;height:11.00px;background:#2cee0e;border-radius:2px;"></div>
<div style="left:226.70px;top:279.70px;width:11.30px;height:11.00px;background:#023f62;border-radius:2px;"></div>
<div style="left:240.60px;top:279.70px;width:11.30px;height:11.00px;background:#0369a3;border-radius:2px;"></div>
<div style="left:254.50px;top:279.70px;width:11.30px;height:11.00px;background:#1c99e0;border-radius:2px;"></div>
<div style="left:268.40px;top:279.70px;width:11.30px;height:11.00px;background:#63bbee;border-radius:2px;"></div>
<div style="left:282.30px;top:279.70px;width:11.30px;height:11.00px;background:#aadcf7;border-radius:2px;"></div>
<div style="left:296.20px;top:279.70px;width:11.30px;height:11.00px;background:#0e9df5;border-radius:2px;"></div>
<div style="left:143.30px;top:293.55px;width:11.30px;height:11.00px;background:#622502;border-radius:2px;"></div>
<div style="left:157.20px;top:293.55px;width:11.30px;height:11.00px;background:#a33e03;border-radius:2px;"></div>
<div style="left:171.10px;top:293.55px;width:11.30px;height:11.00px;background:#d36118;border-radius:2px;"></div>
<div style="left:185.00px;top:293.55px;width:11.30px;height:11.00px;background:#f09e6f;border-radius:2px;"></div>
<div style="left:198.90px;top:293.55px;width:11.30px;height:11.00px;background:#f9cfb5;border-radius:2px;"></div>
<div style="left:212.80px;top:293.55px;width:11.30px;height:11.00px;background:#ff5f0e;border-radius:2px;"></div>
<div style="left:226.70px;top:293.55px;width:11.30px;height:11.00px;background:#530260;border-radius:2px;"></div>
<div style="left:240.60px;top:293.55px;width:11.30px;height:11.00px;background:#8e03a3;border-radius:2px;"></div>
<div style="left:254.50px;top:293.55px;width:11.30px;height:11.00px;background:#c254d2;border-radius:2px;"></div>
<div style="left:268.40px;top:293.55px;width:11.30px;height:11.00px;background:#d78ae2;border-radius:2px;"></div>
<div style="left:282.30px;top:293.55px;width:11.30px;height:11.00px;background:#f3d5f7;border-radius:2px;"></div>
<div style="left:296.20px;top:293.55px;width:11.30px;height:11.00px;background:#e327ff;border-radius:2px;"></div>
<div style="left:143.30px;top:307.40px;width:11.30px;height:11.00px;background:#876900;border-radius:2px;"></div>
<div style="left:157.20px;top:307.40px;width:11.30px;height:11.00px;background:#c99c00;border-radius:2px;"></div>
<div style="left:171.10px;top:307.40px;width:11.30px;height:11.00px;background:#e9b913;border-radius:2px;"></div>
<div style="left:185.00px;top:307.40px;width:11.30px;height:11.00px;background:#f5ce53;border-radius:2px;"></div>
<div style="left:198.90px;top:307.40px;width:11.30px;height:11.00px;background:#fde9a9;border-radius:2px;"></div>
<div style="left:212.80px;top:307.40px;width:11.30px;height:11.00px;background:#f7cf50;border-radius:2px;"></div>
<div style="left:226.70px;top:307.40px;width:11.30px;height:11.00px;background:#000000;border-radius:2px;"></div>
<div style="left:240.60px;top:307.40px;width:11.30px;height:11.00px;background:#ffffff;border-radius:2px;border:1px solid #d0d0d0;"></div>
<span class="t" id="t103" style="top:429.20px;font-size:10.8px;line-height:14px;color:#111;letter-spacing:-0.255px;left:137.10px;">Colori recenti</span>
<div style="left:137.10px;top:445.50px;width:176.50px;height:13.70px;background:#f0f0f0;"></div>
<div style="left:138.00px;top:446.40px;width:12.00px;height:11.90px;background:#e327ff;border-radius:2px;"></div>
<div style="left:152.87px;top:446.40px;width:12.00px;height:11.90px;background:#c9211e;border-radius:2px;"></div>
<div style="left:167.74px;top:446.40px;width:12.00px;height:11.90px;background:#f4f4f4;border-radius:2px;border:1px solid #cfcfcf;"></div>
<div style="left:182.61px;top:446.40px;width:12.00px;height:11.90px;background:#808080;border-radius:2px;"></div>
<span class="t" id="t104" style="top:471.00px;font-size:10.8px;line-height:14px;color:#111;letter-spacing:-0.350px;left:137.10px;transform-origin:0 50%;transform:scaleX(0.9743);">Tavolozza personalizzata</span>
<div style="left:138.00px;top:487.70px;width:84.70px;height:24.10px;background:#e1e1e1;border:1px solid #b4b4b4;"></div>
<span class="t" id="t105" style="top:493.15px;font-size:10.8px;line-height:14px;color:#111;letter-spacing:0.067px;left:180.35px;transform:translateX(-50%);margin-left:0.03px;"><u>A</u>ggiungi</span>
<div style="left:227.10px;top:487.70px;width:84.70px;height:24.10px;background:#cccccc;border:1px solid #c4c4c4;"></div>
<span class="t" id="t106" style="top:493.15px;font-size:10.8px;line-height:14px;color:#8f8f8f;letter-spacing:-0.350px;left:269.45px;transform:translateX(-50%) scaleX(0.9788);margin-left:-0.17px;">Elimina</span>
<div style="left:332.40px;top:252.70px;width:121.20px;height:42.40px;background:#000;border-radius:2px;"></div>
<div style="left:472.40px;top:252.70px;width:121.80px;height:42.40px;background:#729fcf;border-radius:2px;"></div>
<div style="left:393.00px;top:306.40px;width:61.00px;height:18.40px;background:#fff;border:1px solid #c2c2c2;"></div>
<span class="t" id="t107" style="top:309.05px;font-size:10.8px;line-height:14px;color:#a0a0a0;letter-spacing:-0.350px;left:396.60px;transform-origin:0 50%;transform:scaleX(0.9081);">114</span>
<div style="left:534.00px;top:306.40px;width:60.40px;height:18.40px;background:#fff;border:1px solid #bbbbbb;"></div>
<span class="t" id="t108" style="top:309.05px;font-size:10.8px;line-height:14px;color:#111;letter-spacing:-0.350px;left:537.00px;transform-origin:0 50%;transform:scaleX(0.9081);">114</span>
<span class="t" id="t109" style="top:309.05px;font-size:10.8px;line-height:14px;color:#a0a0a0;left:360.00px;transform:translateX(-50%);">R</span>
<span class="t" id="t110" style="top:309.05px;font-size:10.8px;line-height:14px;color:#111;left:500.30px;transform:translateX(-50%);"><u>R</u></span>
<div style="left:579.60px;top:307.40px;width:13.80px;height:16.40px;background:#e6e6e6;border:1px solid #c8c8c8;"></div>
<div style="left:580.00px;top:315.10px;width:13.00px;height:1.00px;background:#c8c8c8;"></div>
<svg style="left:584.00px;top:309.90px;" width="5.00" height="3.00" viewBox="0 0 5 3"><path d="M0 3h5L2.5 0z" fill="#222"/></svg>
<svg style="left:584.00px;top:318.30px;" width="5.00" height="3.00" viewBox="0 0 5 3"><path d="M0 0h5L2.5 3z" fill="#222"/></svg>
<div style="left:393.00px;top:330.70px;width:61.00px;height:18.60px;background:#fff;border:1px solid #c2c2c2;"></div>
<span class="t" id="t111" style="top:333.45px;font-size:10.8px;line-height:14px;color:#a0a0a0;letter-spacing:-0.350px;left:396.60px;transform-origin:0 50%;transform:scaleX(0.8951);">159</span>
<div style="left:534.00px;top:330.70px;width:60.40px;height:18.60px;background:#fff;border:1px solid #bbbbbb;"></div>
<span class="t" id="t112" style="top:333.45px;font-size:10.8px;line-height:14px;color:#111;letter-spacing:-0.350px;left:537.00px;transform-origin:0 50%;transform:scaleX(0.8951);">159</span>
<span class="t" id="t113" style="top:333.45px;font-size:10.8px;line-height:14px;color:#a0a0a0;left:360.00px;transform:translateX(-50%);">V</span>
<span class="t" id="t114" style="top:333.45px;font-size:10.8px;line-height:14px;color:#111;left:500.30px;transform:translateX(-50%);"><u>G</u></span>
<div style="left:579.60px;top:331.70px;width:13.80px;height:16.60px;background:#e6e6e6;border:1px solid #c8c8c8;"></div>
<div style="left:580.00px;top:339.50px;width:13.00px;height:1.00px;background:#c8c8c8;"></div>
<svg style="left:584.00px;top:334.20px;" width="5.00" height="3.00" viewBox="0 0 5 3"><path d="M0 3h5L2.5 0z" fill="#222"/></svg>
<svg style="left:584.00px;top:342.80px;" width="5.00" height="3.00" viewBox="0 0 5 3"><path d="M0 0h5L2.5 3z" fill="#222"/></svg>
<div style="left:393.00px;top:355.20px;width:61.00px;height:18.40px;background:#fff;border:1px solid #c2c2c2;"></div>
<span class="t" id="t115" style="top:357.85px;font-size:10.8px;line-height:14px;color:#a0a0a0;letter-spacing:-0.350px;left:396.60px;transform-origin:0 50%;transform:scaleX(0.9240);">207</span>
<div style="left:534.00px;top:355.20px;width:60.40px;height:18.40px;background:#fff;border:1px solid #bbbbbb;"></div>
<span class="t" id="t116" style="top:357.85px;font-size:10.8px;line-height:14px;color:#111;letter-spacing:-0.350px;left:537.00px;transform-origin:0 50%;transform:scaleX(0.9240);">207</span>
<span class="t" id="t117" style="top:357.85px;font-size:10.8px;line-height:14px;color:#a0a0a0;left:360.00px;transform:translateX(-50%);">B</span>
<span class="t" id="t118" style="top:357.85px;font-size:10.8px;line-height:14px;color:#111;left:500.30px;transform:translateX(-50%);"><u>B</u></span>
<div style="left:579.60px;top:356.20px;width:13.80px;height:16.40px;background:#e6e6e6;border:1px solid #c8c8c8;"></div>
<div style="left:580.00px;top:363.90px;width:13.00px;height:1.00px;background:#c8c8c8;"></div>
<svg style="left:584.00px;top:358.70px;" width="5.00" height="3.00" viewBox="0 0 5 3"><path d="M0 3h5L2.5 0z" fill="#222"/></svg>
<svg style="left:584.00px;top:367.10px;" width="5.00" height="3.00" viewBox="0 0 5 3"><path d="M0 0h5L2.5 3z" fill="#222"/></svg>
<div style="left:393.00px;top:379.40px;width:61.00px;height:18.60px;background:#fff;border:1px solid #c2c2c2;"></div>
<span class="t" id="t119" style="top:382.15px;font-size:10.8px;line-height:14px;color:#a0a0a0;letter-spacing:-0.350px;left:396.60px;transform-origin:0 50%;transform:scaleX(0.9938);">729fcf</span>
<div style="left:534.00px;top:379.40px;width:60.40px;height:18.60px;background:#fff;border:1px solid #bbbbbb;"></div>
<span class="t" id="t120" style="top:382.15px;font-size:10.8px;line-height:14px;color:#111;letter-spacing:-0.350px;left:537.00px;transform-origin:0 50%;transform:scaleX(0.9938);">729fcf</span>
<span class="t" id="t121" style="top:382.15px;font-size:10.8px;line-height:14px;color:#a0a0a0;letter-spacing:-0.350px;left:332.30px;transform-origin:0 50%;transform:scaleX(0.9429);">Esadecimale</span>
<span class="t" id="t122" style="top:382.15px;font-size:10.8px;line-height:14px;color:#111;letter-spacing:-0.350px;left:472.40px;transform-origin:0 50%;transform:scaleX(0.9498);"><u>E</u>sadecimale</span>
<div style="left:473.00px;top:409.50px;width:121.00px;height:24.50px;background:#e1e1e1;border:1px solid #b4b4b4;"></div>
<span class="t" id="t123" style="top:415.15px;font-size:10.8px;line-height:14px;color:#111;left:533.50px;transform:translateX(-50%);"></span>
<span class="t" id="t124" style="top:414.80px;font-size:10.8px;line-height:14px;color:#111;letter-spacing:-0.350px;left:508.00px;transform-origin:0 50%;transform:scaleX(0.9418);">Preleva</span>
<div style="left:119.00px;top:550.50px;width:71.50px;height:24.00px;background:#e1e1e1;border:1px solid #b4b4b4;"></div>
<span class="t" id="t125" style="top:555.90px;font-size:10.8px;line-height:14px;color:#111;letter-spacing:-0.350px;left:154.75px;transform:translateX(-50%) scaleX(0.9688);margin-left:-0.17px;"><u>A</u>iuto</span>
<div style="left:297.50px;top:550.50px;width:71.50px;height:24.00px;background:#e1e1e1;border:1px solid #b4b4b4;"></div>
<span class="t" id="t126" style="top:555.90px;font-size:10.8px;line-height:14px;color:#111;letter-spacing:-0.337px;left:333.25px;transform:translateX(-50%);margin-left:-0.17px;"><u>R</u>ipristina</span>
<div style="left:376.30px;top:550.50px;width:71.50px;height:24.00px;background:#e1e1e1;border:1px solid #b4b4b4;"></div>
<span class="t" id="t127" style="top:555.90px;font-size:10.8px;line-height:14px;color:#111;letter-spacing:-0.350px;left:412.05px;transform:translateX(-50%) scaleX(0.9909);margin-left:-0.17px;"><u>S</u>tandard</span>
<div style="left:455.50px;top:550.50px;width:71.50px;height:24.00px;background:#e1e1e1;border:1px solid #b4b4b4;"></div>
<span class="t" id="t128" style="top:555.90px;font-size:10.8px;line-height:14px;color:#111;letter-spacing:-0.350px;left:491.25px;transform:translateX(-50%) scaleX(0.8847);margin-left:-0.17px;"><u>O</u>K</span>
<div style="left:534.00px;top:550.50px;width:71.70px;height:24.00px;background:#e1e1e1;border:1px solid #b4b4b4;"></div>
<span class="t" id="t129" style="top:555.90px;font-size:10.8px;line-height:14px;color:#111;letter-spacing:-0.091px;left:569.85px;transform:translateX(-50%);margin-left:-0.05px;">Ann<u>u</u>lla</span>
<svg style="left:12.00px;top:12.00px;overflow:visible;" width="10.00" height="15.00" viewBox="12 12 10 15"><path d="M12.6 12.9h5.4l2.6 2.6v10.3h-8z" stroke="#2fae3f" fill="#f1fbf2" stroke-width="1.1" /><path d="M18 12.9l2.6 2.6h-2.6z" stroke="#1d7a2c" fill="#1d7a2c" stroke-width="0.6" /><rect x="13.8" y="18.6" width="5.6" height="5.4" stroke="#2fae3f" fill="#62cf6e" stroke-width="0.9" rx="0"/><path d="M13.8 21.3h5.6M16.6 18.6v5.4" stroke="#eafbea" fill="none" stroke-width="0.7" /></svg>
<svg style="left:1081.00px;top:34.00px;overflow:visible;" width="15.00" height="14.00" viewBox="1081 34 15 14"><circle cx="1087.8" cy="40.8" r="5.6" stroke="#444" fill="none" stroke-width="1"/><path d="M1082.2 40.8h11.2M1087.8 35.2v11.2M1084 37.5q3.8 2 7.6 0M1084 44q3.8-2 7.6 0" stroke="#444" fill="none" stroke-width="0.8" /><ellipse cx="1087.8" cy="40.8" rx="2.6" ry="5.6" stroke="#444" fill="none" stroke-width="0.8"/><path d="M1093.5 42v4.5M1091.5 44.8l2 2 2-2" stroke="#3d8fd9" fill="none" stroke-width="1.1" /></svg>
<svg style="left:1103.00px;top:38.00px;overflow:visible;" width="7.00" height="7.00" viewBox="1103 38 7 7"><path d="M1103.5 38.5l6 6M1109.5 38.5l-6 6" stroke="#444" fill="none" stroke-width="1.1" /></svg>
<svg style="left:16.00px;top:61.00px;overflow:visible;" width="15.00" height="18.00" viewBox="16 61 15 18"><path d="M16.6 61.5h9.2l4.7 4.7v12h-13.9z" stroke="#3fae66" fill="#f3fbf5" stroke-width="1.1" /><path d="M25.8 61.5l4.7 4.7h-4.7z" stroke="#237d45" fill="#237d45" stroke-width="0.6" /><rect x="18.3" y="68.6" width="10.3" height="7.2" stroke="#36a45d" fill="#6fcb8e" stroke-width="0.9" rx="0"/><path d="M18.3 72.2h10.3M23.4 70.5v5.3" stroke="#e8f8ee" fill="none" stroke-width="0.9" /><path d="M18.3 70.2h10.3" stroke="#2f9a55" fill="none" stroke-width="1.2" /></svg>
<svg style="left:52.00px;top:62.00px;overflow:visible;" width="20.00" height="16.00" viewBox="52 62 20 16"><path d="M52.8 77.3v-14.6h5l1.8 2.6h8.2v2.6" stroke="#e8843a" fill="#fdd98c" stroke-width="1.1" /><path d="M52.8 77.3l3.2-9.4h15.6l-3.2 9.4z" stroke="#e8903f" fill="#fbc45f" stroke-width="1.1" /></svg>
<svg style="left:90.50px;top:61.00px;overflow:visible;" width="18.50" height="18.00" viewBox="90.5 61 18.5 18"><path d="M91.3 61.6h16.8v16.8h-16.8z" stroke="#a24dbd" fill="#e6b4f0" stroke-width="1.2" /><rect x="94" y="61.6" width="11.4" height="6.8" stroke="#a24dbd" fill="#fdf4fe" stroke-width="1.0" rx="0"/><rect x="94.8" y="72" width="9.8" height="6.4" stroke="#9a45b6" fill="#c987dc" stroke-width="1.0" rx="0"/><rect x="97.6" y="73.3" width="2.4" height="5.1" stroke="#fff" fill="#fbeefd" stroke-width="0.3" rx="0"/><rect x="101.6" y="73.3" width="1.2" height="5.1" stroke="none" fill="#9a45b6" stroke-width="0" rx="0"/></svg>
<svg style="left:139.00px;top:62.00px;overflow:visible;" width="17.00" height="17.00" viewBox="139 62 17 17"><path d="M139.6 62.8h9.4l4.8 4.8v10.9h-14.2z" stroke="#5a5a5a" fill="#fff" stroke-width="1.1" /><path d="M149 62.8v4.8h4.8" stroke="#5a5a5a" fill="none" stroke-width="1.0" /><path d="M146.2 78.3c3-2.5 4.2-6.5 3.4-8.2c-1 1.8 2 6.3 6.2 6.3c-3-1-7 .2-9.6 1.9z" stroke="#e23b3b" fill="none" stroke-width="1.1" /></svg>
<svg style="left:166.00px;top:63.00px;overflow:visible;" width="19.00" height="16.00" viewBox="166 63 19 16"><rect x="170.3" y="63.6" width="9.8" height="4.6" stroke="#3f86c9" fill="#9ccbf0" stroke-width="1.0" rx="0"/><rect x="166.6" y="68" width="17.3" height="7.2" stroke="#45525c" fill="#566470" stroke-width="1.0" rx="1.2"/><rect x="170.6" y="73.2" width="9.2" height="5" stroke="#45525c" fill="#fff" stroke-width="1.0" rx="0"/><path d="M180.5 70.3h1.6" stroke="#fff" fill="none" stroke-width="1" /></svg>
<svg style="left:196.50px;top:62.00px;overflow:visible;" width="17.00" height="18.00" viewBox="196.5 62 17 18"><path d="M197.4 62.8h8.6l4.8 4.8v10.9h-13.4z" stroke="#5a5a5a" fill="#fff" stroke-width="1.1" /><path d="M206 62.8v4.8h4.8" stroke="#5a5a5a" fill="none" stroke-width="1.0" /><circle cx="205.6" cy="73" r="3.2" stroke="#3d8fd9" fill="#e4f1fb" stroke-width="1.1"/><path d="M208 75.6l4 3.7" stroke="#3d8fd9" fill="none" stroke-width="1.4" /></svg>
<svg style="left:231.00px;top:61.50px;overflow:visible;" width="17.00" height="17.50" viewBox="231 61.5 17 17.5"><path d="M234.6 62.2l7.8 11.6M244 62.2l-7.8 11.6" stroke="#3c3c3c" fill="none" stroke-width="1.5" /><circle cx="234.3" cy="76" r="2.3" stroke="#4a94da" fill="none" stroke-width="1.2"/><circle cx="244.3" cy="76" r="2.3" stroke="#4a94da" fill="none" stroke-width="1.2"/></svg>
<svg style="left:259.00px;top:61.00px;overflow:visible;" width="18.50" height="18.00" viewBox="259 61 18.5 18"><path d="M259.6 61.8h5.6l3.2 3.2v8.6h-8.8z" stroke="#555" fill="#fff" stroke-width="1.0" /><path d="M261.3 66.3h4.6M261.3 68.8h4.6" stroke="#3d8fd9" fill="none" stroke-width="0.9" /><path d="M266.6 66.1h6.2l3.6 3.6v8.6h-9.8z" stroke="#555" fill="#fff" stroke-width="1.1" /><path d="M272.8 66.1v3.6h3.6" stroke="#555" fill="none" stroke-width="0.9" /><path d="M268.5 72.3h6M268.5 74.8h6" stroke="#3d8fd9" fill="none" stroke-width="1.0" /></svg>
<svg style="left:288.00px;top:61.50px;overflow:visible;" width="16.50" height="18.50" viewBox="288 61.5 16.5 18.5"><rect x="288.6" y="64" width="12.8" height="14.2" stroke="#e59a4a" fill="#fff8ee" stroke-width="1.2" rx="0"/><path d="M292 64.5v-1.6h2l.8-1h1l.8 1h2v1.6z" stroke="#555" fill="#777" stroke-width="0.6" /><path d="M296 69.8h4.6l3.2 3v6.3h-7.8z" stroke="#555" fill="#fff" stroke-width="1.1" /></svg>
<svg style="left:333.50px;top:61.00px;overflow:visible;" width="15.00" height="18.00" viewBox="333.5 61 15 18"><path d="M347 62l-5.3 8" stroke="#3a3a3a" fill="none" stroke-width="2" /><path d="M338.2 68.2l6 3.6" stroke="#3a3a3a" fill="none" stroke-width="2.4" /><path d="M337.6 69.5c-2 1.3-3.6 4.8-3.4 8.6h7.6c1.6-1.6 2.2-3.8 1.8-5.8z" stroke="#eba66b" fill="#f8d4ae" stroke-width="0.9" /></svg>
<svg style="left:361.00px;top:62.50px;overflow:visible;" width="19.00" height="16.50" viewBox="361 62.5 19 16.5"><text x="362.2" y="74" font-size="15.5" fill="#3c3c3c" font-weight="normal" font-style="normal" text-anchor="start" font-family="Liberation Sans, sans-serif">A</text><path d="M361.5 76.6h6.5" stroke="#3d8fd9" fill="none" stroke-width="1.1" /><rect x="368.8" y="71.3" width="9.2" height="5.4" rx="0.8" fill="#e23b3b" transform="rotate(-38 373.4 74)"/><rect x="368.8" y="71.3" width="3" height="5.4" rx="0.6" fill="#f08a8a" transform="rotate(-38 373.4 74)"/></svg>
<svg style="left:396.00px;top:63.00px;overflow:visible;" width="16.50" height="15.00" viewBox="396 63 16.5 15"><path d="M396.8 67.5h9.4c3 0 5.4 2.3 5.4 5.2c0 2.6-2 4.4-4.6 4.6" stroke="#bdbdbd" fill="none" stroke-width="1.2" /><path d="M401.2 63.6l-4.4 3.9l4.4 3.9" stroke="#bdbdbd" fill="none" stroke-width="1.2" /></svg>
<svg style="left:434.00px;top:63.00px;overflow:visible;" width="16.50" height="15.00" viewBox="434 63 16.5 15"><path d="M449.8 67.5h-9.4c-3 0-5.4 2.3-5.4 5.2c0 2.6 2 4.4 4.6 4.6" stroke="#bdbdbd" fill="none" stroke-width="1.2" /><path d="M445.4 63.6l4.4 3.9l-4.4 3.9" stroke="#bdbdbd" fill="none" stroke-width="1.2" /></svg>
<svg style="left:480.00px;top:61.00px;overflow:visible;" width="20.00" height="18.50" viewBox="480 61 20 18.5"><circle cx="490.6" cy="67.6" r="5.6" stroke="#3c3c3c" fill="#eef6fd" stroke-width="1.2"/><path d="M486.6 71.8l-5.6 6.2" stroke="#2c2c2c" fill="none" stroke-width="1.8" /><text x="487.8" y="70.6" font-size="9.2" fill="#3d8fd9" font-weight="normal" font-style="normal" text-anchor="start" font-family="Liberation Sans, sans-serif">a</text><text x="492.6" y="78.6" font-size="10.5" fill="#3c3c3c" font-weight="normal" font-style="normal" text-anchor="start" font-family="Liberation Sans, sans-serif">d</text></svg>
<svg style="left:507.00px;top:60.00px;overflow:visible;" width="21.00" height="19.50" viewBox="507 60 21 19.5"><text x="507.2" y="70" font-size="11.2" fill="#3c3c3c" font-weight="normal" font-style="normal" text-anchor="start" font-family="Liberation Sans, sans-serif">abc</text><path d="M515.4 73.8l3.6 4l7.8-8.2" stroke="#49b061" fill="none" stroke-width="1.5" /></svg>
<svg style="left:542.00px;top:60.50px;overflow:visible;" width="19.50" height="19.00" viewBox="542 60.5 19.5 19"><rect x="543" y="61.3" width="17.399999999999977" height="17.0" stroke="none" fill="#fff" stroke-width="0" rx="0"/><rect x="543.0" y="65.55" width="4.349999999999994" height="4.25" stroke="none" fill="#3f97e6" stroke-width="0" rx="0"/><rect x="547.35" y="65.55" width="4.349999999999994" height="4.25" stroke="none" fill="#3f97e6" stroke-width="0" rx="0"/><rect x="551.7" y="65.55" width="4.349999999999994" height="4.25" stroke="none" fill="#3f97e6" stroke-width="0" rx="0"/><rect x="556.05" y="65.55" width="4.349999999999994" height="4.25" stroke="none" fill="#3f97e6" stroke-width="0" rx="0"/><rect x="543.0" y="61.3" width="4.349999999999994" height="4.25" stroke="none" fill="#e6f2fc" stroke-width="0" rx="0"/><rect x="547.35" y="61.3" width="4.349999999999994" height="4.25" stroke="none" fill="#e6f2fc" stroke-width="0" rx="0"/><rect x="551.7" y="61.3" width="4.349999999999994" height="4.25" stroke="none" fill="#e6f2fc" stroke-width="0" rx="0"/><rect x="556.05" y="61.3" width="4.349999999999994" height="4.25" stroke="none" fill="#e6f2fc" stroke-width="0" rx="0"/><path d="M547.35 61.3V78.3" stroke="#9a9a9a" fill="none" stroke-width="0.8" /><path d="M551.70 61.3V78.3" stroke="#9a9a9a" fill="none" stroke-width="0.8" /><path d="M556.05 61.3V78.3" stroke="#9a9a9a" fill="none" stroke-width="0.8" /><path d="M543 65.55H560.4" stroke="#9a9a9a" fill="none" stroke-width="0.8" /><path d="M543 69.80H560.4" stroke="#9a9a9a" fill="none" stroke-width="0.8" /><path d="M543 74.05H560.4" stroke="#9a9a9a" fill="none" stroke-width="0.8" /><rect x="543" y="61.3" width="17.399999999999977" height="17.0" stroke="#555" fill="none" stroke-width="1.2" rx="0.8"/></svg>
<svg style="left:580.00px;top:60.50px;overflow:visible;" width="19.50" height="19.00" viewBox="580 60.5 19.5 19"><rect x="581" y="61.3" width="17.399999999999977" height="17.0" stroke="none" fill="#fff" stroke-width="0" rx="0"/><rect x="585.35" y="61.3" width="4.349999999999994" height="4.25" stroke="none" fill="#3f97e6" stroke-width="0" rx="0"/><rect x="585.35" y="65.55" width="4.349999999999994" height="4.25" stroke="none" fill="#3f97e6" stroke-width="0" rx="0"/><rect x="585.35" y="69.8" width="4.349999999999994" height="4.25" stroke="none" fill="#3f97e6" stroke-width="0" rx="0"/><rect x="585.35" y="74.05" width="4.349999999999994" height="4.25" stroke="none" fill="#3f97e6" stroke-width="0" rx="0"/><path d="M585.35 61.3V78.3" stroke="#9a9a9a" fill="none" stroke-width="0.8" /><path d="M589.70 61.3V78.3" stroke="#9a9a9a" fill="none" stroke-width="0.8" /><path d="M594.05 61.3V78.3" stroke="#9a9a9a" fill="none" stroke-width="0.8" /><path d="M581 65.55H598.4" stroke="#9a9a9a" fill="none" stroke-width="0.8" /><path d="M581 69.80H598.4" stroke="#9a9a9a" fill="none" stroke-width="0.8" /><path d="M581 74.05H598.4" stroke="#9a9a9a" fill="none" stroke-width="0.8" /><rect x="581" y="61.3" width="17.399999999999977" height="17.0" stroke="#555" fill="none" stroke-width="1.2" rx="0.8"/></svg>
<svg style="left:625.50px;top:60.00px;overflow:visible;" width="20.50" height="19.50" viewBox="625.5 60 20.5 19.5"><rect x="626.2" y="61" width="18.8" height="17.8" stroke="#444" fill="#fff" stroke-width="1.2" rx="0"/><rect x="626.2" y="60.8" width="18.8" height="1.8" stroke="#444" fill="#555" stroke-width="0.6" rx="0"/><path d="M635.6 62v16.8" stroke="#444" fill="none" stroke-width="1" /><text x="628" y="69.8" font-size="7.6" fill="#4a8fdc" font-weight="normal" font-style="normal" text-anchor="start" font-family="Liberation Sans, sans-serif">A</text><text x="628.2" y="77.6" font-size="7.6" fill="#c65cc4" font-weight="normal" font-style="normal" text-anchor="start" font-family="Liberation Sans, sans-serif">Z</text><text x="637.6" y="69.8" font-size="7.6" fill="#c65cc4" font-weight="normal" font-style="normal" text-anchor="start" font-family="Liberation Sans, sans-serif">Z</text><text x="637.4" y="77.6" font-size="7.6" fill="#4a8fdc" font-weight="normal" font-style="normal" text-anchor="start" font-family="Liberation Sans, sans-serif">A</text></svg>
<svg style="left:656.00px;top:61.50px;overflow:visible;" width="19.50" height="17.50" viewBox="656 61.5 19.5 17.5"><text x="656.2" y="68.8" font-size="9.4" fill="#4a8fdc" font-weight="normal" font-style="normal" text-anchor="start" font-family="Liberation Sans, sans-serif">A</text><text x="656.6" y="78.7" font-size="9.4" fill="#c65cc4" font-weight="normal" font-style="normal" text-anchor="start" font-family="Liberation Sans, sans-serif">Z</text><path d="M670.2 63v12.4M666.3 71.8l3.9 3.9l3.9-3.9" stroke="#3c3c3c" fill="none" stroke-width="1.2" /></svg>
<svg style="left:685.00px;top:61.50px;overflow:visible;" width="19.50" height="17.50" viewBox="685 61.5 19.5 17.5"><text x="685.4" y="68.8" font-size="9.4" fill="#c65cc4" font-weight="normal" font-style="normal" text-anchor="start" font-family="Liberation Sans, sans-serif">Z</text><text x="685" y="78.7" font-size="9.4" fill="#4a8fdc" font-weight="normal" font-style="normal" text-anchor="start" font-family="Liberation Sans, sans-serif">A</text><path d="M698.9 63v12.4M695 71.8l3.9 3.9l3.9-3.9" stroke="#3c3c3c" fill="none" stroke-width="1.2" /></svg>
<svg style="left:714.00px;top:61.50px;overflow:visible;" width="18.00" height="17.50" viewBox="714 61.5 18 17.5"><path d="M714.8 62.4h14.8l-5.6 7v6.2l-3.6-2.4v-3.8z" stroke="#3c3c3c" fill="#fff" stroke-width="1.2" /><path d="M727.8 69.4l-4.6 5h3l-2.4 4.4l6.6-6.2h-3.2l2.6-3.2z" stroke="#f0962e" fill="#f7b050" stroke-width="0.6" /></svg>
<svg style="left:748.50px;top:61.00px;overflow:visible;" width="18.00" height="18.00" viewBox="748.5 61 18 18"><rect x="749.2" y="61.7" width="16.6" height="16.6" stroke="#555" fill="#fff" stroke-width="1.2" rx="0"/><circle cx="753.3" cy="66" r="1.9" stroke="#ef9a3c" fill="#f7b55f" stroke-width="0.6"/><path d="M749.8 77.7v-4.2l4.4-3.6l2.6 2.2l4.4-5l4 4.6v6z" stroke="#3a86d0" fill="#58a4e8" stroke-width="0.6" /></svg>
<svg style="left:777.00px;top:61.00px;overflow:visible;" width="18.00" height="18.00" viewBox="777 61 18 18"><rect x="777.6" y="66.4" width="3.6" height="12" stroke="#2f7fcc" fill="#58a4e8" stroke-width="0.9" rx="0.6"/><rect x="783.8" y="61.6" width="3.8" height="16.8" stroke="#ea9a3a" fill="#fbcd6b" stroke-width="0.9" rx="0.6"/><rect x="789.8" y="68.4" width="3.8" height="10" stroke="#555" fill="#6a6a6a" stroke-width="0.9" rx="0.6"/></svg>
<svg style="left:806.00px;top:61.00px;overflow:visible;" width="17.50" height="18.00" viewBox="806 61 17.5 18"><rect x="806.8" y="61.7" width="15.8" height="16.6" stroke="#555" fill="#fff" stroke-width="1.2" rx="0"/><path d="M807.4 65h14.6M810.4 62.3v15.4" stroke="#999" fill="none" stroke-width="0.9" /><path d="M812.2 63.4h2.2M816 63.4h2.2M808.6 67h.6M808.6 70h.6" stroke="#777" fill="none" stroke-width="1" /><path d="M813.2 70.5a4 4 0 0 1 6.6-2.6M820.4 72.3a4 4 0 0 1-6.6 2.6" stroke="#3d8fd9" fill="none" stroke-width="1.1" /><path d="M818.2 66.2l2 1.8l-2.4.8M815.4 76.6l-2-1.8l2.4-.8" stroke="#3d8fd9" fill="none" stroke-width="1" /></svg>
<svg style="left:839.00px;top:61.50px;overflow:visible;" width="19.00" height="17.50" viewBox="839 61.5 19 17.5"><path d="M839.8 78.2h6v-1.6c-2.8-1.4-4.6-4-4.6-7.2c0-4.2 3.2-7.2 7.3-7.2s7.3 3 7.3 7.2c0 3.2-1.8 5.8-4.6 7.2v1.6h6" stroke="#3c3c3c" fill="none" stroke-width="1.25" /></svg>
<svg style="left:880.00px;top:60.00px;overflow:visible;" width="18.50" height="20.00" viewBox="880 60 18.5 20"><circle cx="887" cy="67.6" r="7.2" stroke="#3c3c3c" fill="#fff" stroke-width="1.1"/><path d="M879.8 67.6h14.4M887 60.4v14.4M881.6 63.6q5.4 2.4 10.8 0M881.6 71.6q5.4-2.4 10.8 0" stroke="#3c3c3c" fill="none" stroke-width="0.8" /><ellipse cx="887" cy="67.6" rx="3.3" ry="7.2" stroke="#3c3c3c" fill="none" stroke-width="0.8"/><rect x="882" y="73.4" width="7.6" height="5.4" stroke="#57a0e0" fill="#f4f9fe" stroke-width="1.3" rx="2.7"/><rect x="890.2" y="73.4" width="7.6" height="5.4" stroke="#57a0e0" fill="#f4f9fe" stroke-width="1.3" rx="2.7"/><path d="M886.4 76.1h6.6" stroke="#57a0e0" fill="none" stroke-width="1.3" /></svg>
<svg style="left:908.00px;top:61.00px;overflow:visible;" width="18.50" height="18.00" viewBox="908 61 18.5 18"><path d="M908.6 61.8h17.2v12h-9.6l-3.8 4.2v-4.2h-3.8z" stroke="#444" fill="#fff" stroke-width="1.2" /></svg>
<svg style="left:938.00px;top:61.00px;overflow:visible;" width="15.00" height="18.00" viewBox="938 61 15 18"><path d="M939 61.7h8.4l4.8 4.8v11.8h-13.2z" stroke="#e59a55" fill="#fff" stroke-width="1.1" /><path d="M947.4 61.7v4.8h4.8" stroke="#e59a55" fill="none" stroke-width="1" /><rect x="940.6" y="64.3" width="5.6" height="2.2" stroke="none" fill="#f5c9a0" stroke-width="0" rx="0"/><rect x="940.6" y="73.6" width="10" height="2.8" stroke="none" fill="#f0a868" stroke-width="0" rx="0"/></svg>
<svg style="left:972.00px;top:60.00px;overflow:visible;" width="20.00" height="20.50" viewBox="972 60 20 20.5"><rect x="972.8" y="60.8" width="16.800000000000068" height="17.5" stroke="none" fill="#fff" stroke-width="0" rx="0"/><rect x="972.8" y="60.8" width="5.600000000000023" height="4.375" stroke="none" fill="#2e86dc" stroke-width="0" rx="0"/><rect x="978.4" y="60.8" width="5.600000000000023" height="4.375" stroke="none" fill="#4a9be6" stroke-width="0" rx="0"/><rect x="984.0" y="60.8" width="5.600000000000023" height="4.375" stroke="none" fill="#a9d0f3" stroke-width="0" rx="0"/><rect x="972.8" y="65.175" width="5.600000000000023" height="4.375" stroke="none" fill="#2e86dc" stroke-width="0" rx="0"/><rect x="972.8" y="69.55" width="5.600000000000023" height="4.375" stroke="none" fill="#8fc2ee" stroke-width="0" rx="0"/><path d="M978.40 60.8V78.3" stroke="#9ab" fill="none" stroke-width="0.8" /><path d="M984.00 60.8V78.3" stroke="#9ab" fill="none" stroke-width="0.8" /><path d="M972.8 65.17H989.6" stroke="#9ab" fill="none" stroke-width="0.8" /><path d="M972.8 69.55H989.6" stroke="#9ab" fill="none" stroke-width="0.8" /><path d="M972.8 73.92H989.6" stroke="#9ab" fill="none" stroke-width="0.8" /><rect x="972.8" y="60.8" width="16.800000000000068" height="17.5" stroke="#4a6a8a" fill="none" stroke-width="1.2" rx="0.8"/><rect x="982.8" y="71.2" width="5.6" height="3" stroke="#444" fill="#fff" stroke-width="0.8" rx="0"/><rect x="980.8" y="73.4" width="9.8" height="4.6" stroke="#333" fill="#4a5560" stroke-width="0.8" rx="1"/><rect x="983" y="76.4" width="5.4" height="3.2" stroke="#333" fill="#fff" stroke-width="0.8" rx="0"/></svg>
<svg style="left:999.00px;top:60.00px;overflow:visible;" width="18.00" height="20.00" viewBox="999 60 18 20"><rect x="999.6" y="61.8" width="16.600000000000023" height="17.0" stroke="none" fill="#fff" stroke-width="0" rx="0"/><rect x="999.6" y="61.8" width="4.150000000000006" height="3.4" stroke="none" fill="#2a80da" stroke-width="0" rx="0"/><rect x="1003.75" y="61.8" width="4.150000000000006" height="3.4" stroke="none" fill="#2a80da" stroke-width="0" rx="0"/><rect x="1007.9000000000001" y="61.8" width="4.150000000000006" height="3.4" stroke="none" fill="#2a80da" stroke-width="0" rx="0"/><rect x="1012.0500000000001" y="61.8" width="4.150000000000006" height="3.4" stroke="none" fill="#2a80da" stroke-width="0" rx="0"/><rect x="999.6" y="61.8" width="4.150000000000006" height="3.4" stroke="none" fill="#2a80da" stroke-width="0" rx="0"/><rect x="999.6" y="65.2" width="4.150000000000006" height="3.4" stroke="none" fill="#2a80da" stroke-width="0" rx="0"/><rect x="999.6" y="68.6" width="4.150000000000006" height="3.4" stroke="none" fill="#2a80da" stroke-width="0" rx="0"/><rect x="999.6" y="72.0" width="4.150000000000006" height="3.4" stroke="none" fill="#2a80da" stroke-width="0" rx="0"/><rect x="999.6" y="75.39999999999999" width="4.150000000000006" height="3.4" stroke="none" fill="#2a80da" stroke-width="0" rx="0"/><path d="M1003.75 61.8V78.8" stroke="#9aa" fill="none" stroke-width="0.8" /><path d="M1007.90 61.8V78.8" stroke="#9aa" fill="none" stroke-width="0.8" /><path d="M1012.05 61.8V78.8" stroke="#9aa" fill="none" stroke-width="0.8" /><path d="M999.6 65.20H1016.2" stroke="#9aa" fill="none" stroke-width="0.8" /><path d="M999.6 68.60H1016.2" stroke="#9aa" fill="none" stroke-width="0.8" /><path d="M999.6 72.00H1016.2" stroke="#9aa" fill="none" stroke-width="0.8" /><path d="M999.6 75.40H1016.2" stroke="#9aa" fill="none" stroke-width="0.8" /><rect x="999.6" y="61.8" width="16.600000000000023" height="17.0" stroke="#3f6fa8" fill="none" stroke-width="1.2" rx="0.8"/><path d="M1001.7 59.6v3.6M1000 60.5l3.4 1.8M1003.4 60.5l-3.4 1.8" stroke="#2a80da" fill="none" stroke-width="0.7" /></svg>
<svg style="left:1039.00px;top:61.00px;overflow:visible;" width="17.50" height="17.50" viewBox="1039 61 17.5 17.5"><rect x="1039.7" y="61.7" width="16" height="16.2" stroke="#4a4a4a" fill="#f2f8fd" stroke-width="1.2" rx="0"/><rect x="1039.7" y="61.5" width="16" height="3" stroke="#4a4a4a" fill="#5a5a5a" stroke-width="0.8" rx="0"/><path d="M1038.4 70.4h18.6" stroke="#4a9be0" fill="none" stroke-width="1.1" stroke-dasharray="3 1.6"/></svg>
<svg style="left:1074.00px;top:60.00px;overflow:visible;" width="19.00" height="19.00" viewBox="1074 60 19 19"><circle cx="1087.2" cy="65.6" r="4.9" stroke="#444" fill="#fff" stroke-width="1.1"/><rect x="1074.6" y="66.8" width="8.4" height="9.8" stroke="#444" fill="#fff" stroke-width="1.1" rx="0"/><path d="M1085.6 66.2l5.8 5.8l-5.8 5.8l-5.8-5.8z" stroke="#444" fill="#fff" stroke-width="1.1" /></svg>
<svg style="left:295.50px;top:95.00px;overflow:visible;" width="21.00" height="19.50" viewBox="295.5 95 21 19.5"><text x="300.2" y="108" font-size="16.5" fill="#3c3c3c" font-weight="normal" font-style="normal" text-anchor="start" font-family="Liberation Sans, sans-serif">A</text><rect x="295.6" y="109.4" width="20.6" height="4.4" stroke="none" fill="#c9211e" stroke-width="0" rx="0"/></svg>
<svg style="left:332.00px;top:94.50px;overflow:visible;" width="24.00" height="20.00" viewBox="332 94.5 24 20"><rect x="332.2" y="108.8" width="23" height="5.4" stroke="none" fill="#ffff00" stroke-width="0" rx="1"/><path d="M337 105.4v-7.6h3.4" stroke="#2a6fc0" fill="none" stroke-width="1.8" /><path d="M340.4 99.2l7.4-2.6l2.4 8.2l-7.2 2.8z" stroke="#444" fill="#fff" stroke-width="1.1" /><path d="M346.2 97.2c-.6-2.4 2.2-2.8 2.6-.8" stroke="#444" fill="none" stroke-width="1" /></svg>
<svg style="left:383.00px;top:95.00px;overflow:visible;" width="16.00" height="18.00" viewBox="383 95 16 18"><path d="M383 95.7H398.6" stroke="#3a3a3a" fill="none" stroke-width="1.25" /><path d="M383 98.4H392" stroke="#8a8a8a" fill="none" stroke-width="1.25" /><path d="M383 102.5H398.6" stroke="#3a3a3a" fill="none" stroke-width="1.25" /><path d="M383 105.2H392" stroke="#8a8a8a" fill="none" stroke-width="1.25" /><path d="M383 109.4H398.6" stroke="#3a3a3a" fill="none" stroke-width="1.25" /><path d="M383 112.1H392" stroke="#8a8a8a" fill="none" stroke-width="1.25" /></svg>
<svg style="left:411.00px;top:95.00px;overflow:visible;" width="16.00" height="18.00" viewBox="411 95 16 18"><path d="M411.2 95.7H427" stroke="#3a3a3a" fill="none" stroke-width="1.25" /><path d="M415.4 98.4H423.8" stroke="#8a8a8a" fill="none" stroke-width="1.25" /><path d="M411.2 102.5H427" stroke="#3a3a3a" fill="none" stroke-width="1.25" /><path d="M415.4 105.2H423.8" stroke="#8a8a8a" fill="none" stroke-width="1.25" /><path d="M411.2 109.4H427" stroke="#3a3a3a" fill="none" stroke-width="1.25" /><path d="M415.4 112.1H423.8" stroke="#8a8a8a" fill="none" stroke-width="1.25" /></svg>
<svg style="left:440.00px;top:95.00px;overflow:visible;" width="16.00" height="18.00" viewBox="440 95 16 18"><path d="M440.2 95.7H456" stroke="#3a3a3a" fill="none" stroke-width="1.25" /><path d="M446.6 98.4H456" stroke="#8a8a8a" fill="none" stroke-width="1.25" /><path d="M440.2 102.5H456" stroke="#3a3a3a" fill="none" stroke-width="1.25" /><path d="M446.6 105.2H456" stroke="#8a8a8a" fill="none" stroke-width="1.25" /><path d="M440.2 109.4H456" stroke="#3a3a3a" fill="none" stroke-width="1.25" /><path d="M446.6 112.1H456" stroke="#8a8a8a" fill="none" stroke-width="1.25" /></svg>
<svg style="left:476.00px;top:95.00px;overflow:visible;" width="16.50" height="18.00" viewBox="476 95 16.5 18"><path d="M476 95.7H491.2" stroke="#3a3a3a" fill="none" stroke-width="1.25" /><path d="M476 98.4H485.6" stroke="#8a8a8a" fill="none" stroke-width="1.25" /><path d="M476 102.5H486" stroke="#3a3a3a" fill="none" stroke-width="1.25" /><path d="M476 105.2H481.4" stroke="#8a8a8a" fill="none" stroke-width="1.25" /><path d="M476 112.1H491.4" stroke="#8a8a8a" fill="none" stroke-width="1.25" /><path d="M484 104.2c3-.6 5.4 1 5.8 4.2M487.2 108l2.8 1.6l1.6-2.8" stroke="#3d8fd9" fill="none" stroke-width="1.2" /></svg>
<svg style="left:503.50px;top:95.00px;overflow:visible;" width="18.00" height="18.00" viewBox="503.5 95 18 18"><rect x="504.1" y="95.7" width="16.8" height="16.6" stroke="#b4b4b4" fill="#d4d4d4" stroke-width="1.1" rx="0.8"/><path d="M504.1 100h16.8M504.1 108.2h16.8M509.7 95.7v4.3M515.3 95.7v4.3M509.7 108.2v4.1M515.3 108.2v4.1M504.1 104.1h16.8" stroke="#bdbdbd" fill="none" stroke-width="0.8" /></svg>
<svg style="left:540.00px;top:95.00px;overflow:visible;" width="16.00" height="19.00" viewBox="540 95 16 19"><path d="M540 95.7H555.6" stroke="#3a3a3a" fill="none" stroke-width="1.25" /><path d="M540 98.4H549" stroke="#8a8a8a" fill="none" stroke-width="1.25" /><path d="M540 102.5H555.6" stroke="#3a3a3a" fill="none" stroke-width="1.25" /><path d="M547.6 113.6v-8M544.6 108l3-3l3 3" stroke="#3d8fd9" fill="none" stroke-width="1.1" /></svg>
<svg style="left:568.00px;top:94.50px;overflow:visible;" width="16.50" height="19.50" viewBox="568 94.5 16.5 19.5"><path d="M568.4 102.4H584" stroke="#3a3a3a" fill="none" stroke-width="1.25" /><path d="M570 105.1H581.4" stroke="#8a8a8a" fill="none" stroke-width="1.25" /><path d="M575.6 95v5.2M573 97.8l2.6 2.6l2.6-2.6M575.6 113.6v-6M573 110l2.6-2.6l2.6 2.6" stroke="#3d8fd9" fill="none" stroke-width="1.1" /></svg>
<svg style="left:597.00px;top:94.50px;overflow:visible;" width="16.00" height="18.50" viewBox="597 94.5 16 18.5"><path d="M597.4 105.1H606" stroke="#8a8a8a" fill="none" stroke-width="1.25" /><path d="M597.4 109.4H612.8" stroke="#3a3a3a" fill="none" stroke-width="1.25" /><path d="M597.4 112.1H606" stroke="#8a8a8a" fill="none" stroke-width="1.25" /><path d="M605 95v7.6M602 99.8l3 3l3-3" stroke="#3d8fd9" fill="none" stroke-width="1.1" /></svg>
<svg style="left:629.00px;top:98.00px;overflow:visible;" width="19.50" height="15.50" viewBox="629 98 19.5 15.5"><path d="M632 108.6h-2.6v-9.8h18.2v6" stroke="#3c3c3c" fill="none" stroke-width="1.2" /><circle cx="638.2" cy="103" r="2.2" stroke="#444" fill="#555" stroke-width="0.6"/><circle cx="635.4" cy="110.4" r="1.9" stroke="#444" fill="#ddd" stroke-width="0.9"/><rect x="639.2" y="107.4" width="4" height="5.4" stroke="#444" fill="#e4e4e4" stroke-width="0.9" rx="1"/><path d="M639.2 109.2h4M639.2 111h4" stroke="#444" fill="none" stroke-width="0.7" /><rect x="644" y="104.6" width="4" height="8.2" stroke="#444" fill="#e4e4e4" stroke-width="0.9" rx="1"/><path d="M644 106.4h4M644 108.2h4M644 110h4M644 111.6h4" stroke="#444" fill="none" stroke-width="0.7" /></svg>
<svg style="left:671.00px;top:96.00px;overflow:visible;" width="15.00" height="15.50" viewBox="671 96 15 15.5"><circle cx="674.4" cy="99.8" r="2.7" stroke="#444" fill="none" stroke-width="1.2"/><circle cx="682.4" cy="107.8" r="2.7" stroke="#444" fill="none" stroke-width="1.2"/><path d="M682.8 96.6l-8.8 14.4" stroke="#444" fill="none" stroke-width="1.2" /></svg>
<svg style="left:697.00px;top:97.00px;overflow:visible;" width="21.00" height="14.50" viewBox="697 97 21 14.5"><ellipse cx="701.6" cy="104" rx="3.9" ry="6.2" stroke="#444" fill="none" stroke-width="1.15"/><ellipse cx="712.8" cy="104" rx="3.9" ry="6.2" stroke="#444" fill="none" stroke-width="1.15"/><rect x="706.4" y="109.2" width="1.5" height="1.5" stroke="none" fill="#222" stroke-width="0" rx="0"/></svg>
<svg style="left:727.00px;top:95.00px;overflow:visible;" width="18.00" height="18.00" viewBox="727 95 18 18"><rect x="728" y="97.8" width="15.8" height="14.4" stroke="#3c3c3c" fill="#fff" stroke-width="1.2" rx="0"/><path d="M728 98h15.8" stroke="#3c3c3c" fill="none" stroke-width="1.8" /><path d="M730.6 95.6v2.2M741.2 95.6v2.2M733.4 96.4h5" stroke="#3c3c3c" fill="none" stroke-width="1.1" /><text x="732.6" y="110.4" font-size="10.5" fill="#666" font-weight="normal" font-style="normal" text-anchor="start" font-family="Liberation Sans, sans-serif">7</text></svg>
<svg style="left:760.50px;top:96.50px;overflow:visible;" width="21.00" height="17.50" viewBox="760.5 96.5 21 17.5"><rect x="761" y="109.2" width="1.5" height="1.5" stroke="none" fill="#222" stroke-width="0" rx="0"/><ellipse cx="767.4" cy="104" rx="3.3" ry="6.2" stroke="#444" fill="none" stroke-width="1.15"/><ellipse cx="776.6" cy="104" rx="3.3" ry="6.2" stroke="#444" fill="none" stroke-width="1.15"/><path d="M772 111.4h8M776 108.8v5.2" stroke="#3d8fd9" fill="none" stroke-width="1.2" /></svg>
<svg style="left:789.00px;top:96.50px;overflow:visible;" width="21.00" height="17.50" viewBox="789 96.5 21 17.5"><rect x="789.4" y="109.2" width="1.5" height="1.5" stroke="none" fill="#222" stroke-width="0" rx="0"/><ellipse cx="795.8" cy="104" rx="3.3" ry="6.2" stroke="#444" fill="none" stroke-width="1.15"/><ellipse cx="805" cy="104" rx="3.3" ry="6.2" stroke="#444" fill="none" stroke-width="1.15"/><path d="M801.4 106.4l7.6 6.8M809 106.4l-7.6 6.8" stroke="#e05a5a" fill="none" stroke-width="1.2" /></svg>
<svg style="left:826.00px;top:94.00px;overflow:visible;" width="19.50" height="19.00" viewBox="826 94 19.5 19"><path d="M828 94.8H845" stroke="#3a3a3a" fill="none" stroke-width="1.25" /><path d="M836.6 98.8H845" stroke="#8a8a8a" fill="none" stroke-width="1.25" /><path d="M836.6 103.2H845" stroke="#8a8a8a" fill="none" stroke-width="1.25" /><path d="M836.6 107.6H845" stroke="#8a8a8a" fill="none" stroke-width="1.25" /><path d="M828 112.1H845" stroke="#8a8a8a" fill="none" stroke-width="1.25" /><path d="M826.2 103.6h6.6M830.2 100.8l2.8 2.8l-2.8 2.8" stroke="#3d8fd9" fill="none" stroke-width="1.1" /></svg>
<svg style="left:854.00px;top:94.00px;overflow:visible;" width="20.00" height="19.00" viewBox="854 94 20 19"><path d="M857 94.8H873.8" stroke="#3a3a3a" fill="none" stroke-width="1.25" /><path d="M865.2 98.8H873.8" stroke="#8a8a8a" fill="none" stroke-width="1.25" /><path d="M865.2 103.2H873.8" stroke="#8a8a8a" fill="none" stroke-width="1.25" /><path d="M865.2 107.6H873.8" stroke="#8a8a8a" fill="none" stroke-width="1.25" /><path d="M857 112.1H873.8" stroke="#8a8a8a" fill="none" stroke-width="1.25" /><path d="M861.8 103.6h-7M857.6 100.8l-2.8 2.8l2.8 2.8" stroke="#3d8fd9" fill="none" stroke-width="1.1" /></svg>
<svg style="left:889.00px;top:96.00px;overflow:visible;" width="17.50" height="17.00" viewBox="889 96 17.5 17"><rect x="889.6" y="96.7" width="16" height="15.6" stroke="#3c3c3c" fill="#fff" stroke-width="1.2" rx="0"/><rect x="890.2" y="104.5" width="14.8" height="7.2" stroke="none" fill="#fdf0e4" stroke-width="0" rx="0"/><path d="M897.6 96.7v15.6M889.6 104.5h16" stroke="#3c3c3c" fill="none" stroke-width="1.1" /></svg>
<svg style="left:928.00px;top:95.00px;overflow:visible;" width="16.50" height="18.00" viewBox="928 95 16.5 18"><rect x="928" y="95.6" width="16" height="2.5" stroke="none" fill="#333" stroke-width="0" rx="0"/><rect x="928" y="100" width="16" height="2.1" stroke="none" fill="#333" stroke-width="0" rx="0"/><path d="M928 105h16" stroke="#444" fill="none" stroke-width="1.1" stroke-dasharray="3.6 1"/><path d="M928 108h16" stroke="#444" fill="none" stroke-width="1" stroke-dasharray="1.6 1.3"/><rect x="928" y="110.6" width="16" height="2.1" stroke="none" fill="#333" stroke-width="0" rx="0"/></svg>
<svg style="left:963.50px;top:95.00px;overflow:visible;" width="21.50" height="19.00" viewBox="963.5 95 21.5 19"><rect x="966.2" y="95.8" width="16.4" height="12.6" stroke="#3a7fcc" fill="#eaf3fb" stroke-width="1.1" rx="0"/><rect x="968.3" y="97.9" width="12.2" height="8.4" stroke="#3a7fcc" fill="#fdf3ea" stroke-width="0.9" rx="0"/><rect x="963.8" y="109.4" width="20.6" height="4.4" stroke="none" fill="#2a60ac" stroke-width="0" rx="0"/></svg>
<svg style="left:1010.00px;top:95.00px;overflow:visible;" width="19.00" height="18.00" viewBox="1010 95 19 18"><rect x="1010.6" y="95.9" width="16" height="13.4" stroke="none" fill="#fff" stroke-width="0" rx="0"/><rect x="1014.6" y="96" width="12" height="3.4" stroke="none" fill="#7cc98a" stroke-width="0" rx="0"/><rect x="1014.6" y="99.4" width="12" height="3.3" stroke="none" fill="#f08080" stroke-width="0" rx="0"/><rect x="1014.6" y="102.7" width="12" height="3.3" stroke="none" fill="#7cc98a" stroke-width="0" rx="0"/><rect x="1010.6" y="106" width="16" height="3.3" stroke="none" fill="#f08080" stroke-width="0" rx="0"/><path d="M1014.6 95.9v13.4M1020.6 95.9v13.4M1010.6 99.4h16M1010.6 102.7h16M1010.6 106h16" stroke="#555" fill="none" stroke-width="0.7" /><rect x="1010.6" y="95.9" width="16" height="13.4" stroke="#333" fill="none" stroke-width="1.2" rx="0.8"/><rect x="1018.4" y="103.4" width="10" height="9" stroke="#444" fill="#fff" stroke-width="1.1" rx="0"/><path d="M1020.4 106.8h6M1020.4 109.2h6M1025 104.8l-3 6.2" stroke="#444" fill="none" stroke-width="0.9" /></svg>
<svg style="left:691.00px;top:217.00px;overflow:visible;" width="15.00" height="15.50" viewBox="691 217 15 15.5"><rect x="691.6" y="217.8" width="13.399999999999977" height="13.799999999999983" stroke="none" fill="#fdf6f6" stroke-width="0" rx="0"/><path d="M696.07 217.8V231.6" stroke="#777" fill="none" stroke-width="0.8" /><path d="M700.53 217.8V231.6" stroke="#777" fill="none" stroke-width="0.8" /><path d="M691.6 222.40H705" stroke="#777" fill="none" stroke-width="0.8" /><path d="M691.6 227.00H705" stroke="#777" fill="none" stroke-width="0.8" /><rect x="691.6" y="217.8" width="13.399999999999977" height="13.799999999999983" stroke="#444" fill="none" stroke-width="1.2" rx="0.8"/><path d="M705.6 219.4c.8.8.5 1.700-.2 2.500l-5.400 5.800l-1.900-1.700l5.400-5.800c.7-.8 1.500-1.400 2.100-.800z" stroke="#333" fill="#fff" stroke-width="0.9" /><path d="M698 226.800c-1.600.200-2.800 1.400-3.600 3.400c2 .400 4.200 0 5.400-1.600z" stroke="#2f7fcc" fill="#4a9be0" stroke-width="0.5" /></svg>
<svg style="left:713.00px;top:217.00px;overflow:visible;" width="15.00" height="15.50" viewBox="713 217 15 15.5"><path d="M721.4 231.4h-7.6v-13.6h5.6l3.4 3.4v2" stroke="#444" fill="none" stroke-width="1.2" /><path d="M719.4 217.8v3.4h3.4" stroke="#444" fill="none" stroke-width="1" /><path d="M727.6 219.6c.8.8.5 1.700-.2 2.500l-5.400 5.800l-1.900-1.700l5.400-5.800c.7-.8 1.500-1.400 2.100-.800z" stroke="#333" fill="#fff" stroke-width="0.9" /><path d="M720 227c-1.600.200-2.800 1.400-3.600 3.400c2 .400 4.200 0 5.400-1.600z" stroke="#2f7fcc" fill="#4a9be0" stroke-width="0.5" /></svg>
<svg style="left:868.50px;top:217.00px;overflow:visible;" width="13.50" height="12.00" viewBox="868.5 217 13.5 12"><path d="M869.6 226.4v-6.4h3.4" stroke="#2a6fc0" fill="none" stroke-width="2" /><path d="M872.6 220l3.6-1" stroke="#2a6fc0" fill="none" stroke-width="1.4" /><path d="M876.4 224.6v-5.6c0-1.4 2-1.4 2 0v3.4l2.2.6c.8.2 1 1 .8 1.8l-.8 3.4h-4.2l-2.4-3.4c-.6-1 .6-1.8 1.4-1z" stroke="#444" fill="#fff" stroke-width="0.9" /></svg>
<svg style="left:890.50px;top:217.00px;overflow:visible;" width="14.50" height="14.00" viewBox="890.5 217 14.5 14"><text x="890.2" y="229.4" font-size="16" fill="#3c3c3c" font-weight="normal" font-style="italic" text-anchor="start" font-family="Liberation Sans, sans-serif">A</text><circle cx="901.2" cy="227.6" r="1.7" stroke="#f0962e" fill="#fff" stroke-width="0.9"/><path d="M901.2 223.8v1.2M901.2 230.2v1.2M897.4 227.6h1.2M903.8 227.6h1.2M898.6 225l.8.8M903 229.4l.8.8M898.6 230.2l.8-.8M903 225.8l.8-.8" stroke="#f0962e" fill="none" stroke-width="0.9" /></svg>
<svg style="left:912.00px;top:217.00px;overflow:visible;" width="15.50" height="14.00" viewBox="912 217 15.5 14"><text x="911.8" y="229.4" font-size="16" fill="#c2c2c2" font-weight="normal" font-style="italic" text-anchor="start" font-family="Liberation Sans, sans-serif">A</text><path d="M921.4 226.2a2.6 2.6 0 0 1 4.4-1M926 229a2.6 2.6 0 0 1-4.4 1M925 224l1 1.4l-1.6.4M922.4 231.2l-1-1.4l1.6-.4" stroke="#c2c2c2" fill="none" stroke-width="0.9" /></svg>
<svg style="left:942.50px;top:238.00px;overflow:visible;" width="18.00" height="18.00" viewBox="942.5 238 18 18"><rect x="943.3" y="238.9" width="16.6" height="16.4" stroke="#444" fill="#fff" stroke-width="1.2" rx="0"/><rect x="943.3" y="238.7" width="16.6" height="2.6" stroke="#444" fill="#555" stroke-width="0.6" rx="0"/><path d="M946.6 246h10M946.6 250.4h10" stroke="#3d8fd9" fill="none" stroke-width="1.1" /><path d="M953.4 244.4v3.2M949.4 248.8v3.2" stroke="#444" fill="none" stroke-width="1.2" /></svg>
<svg style="left:943.00px;top:268.50px;overflow:visible;" width="19.00" height="17.50" viewBox="943 268.5 19 17.5"><text x="942.4" y="281.6" font-size="17" fill="#3a3a3a" font-weight="normal" font-style="normal" text-anchor="start" font-family="Liberation Sans, sans-serif">A</text><path d="M961.4 273.2c.9.9.6 2-.2 2.9l-6 6.4l-2.2-2l6-6.4c.8-.9 1.700-1.600 2.400-.900z" stroke="#333" fill="#fff" stroke-width="1.0" /><path d="M953 280.600c-1.800.100-3.100 1.400-4.200 3.600c2.200.600 4.800.200 6.200-1.700z" stroke="#2f7fcc" fill="#4a9be0" stroke-width="0.5" /></svg>
<svg style="left:942.00px;top:298.00px;overflow:visible;" width="19.00" height="19.00" viewBox="942 298 19 19"><path d="M942.8 314.2v-15h4.6l1.6 2.2h8.8v4" stroke="#e8903f" fill="#fde3b0" stroke-width="1.1" /><path d="M942.8 314.2v-10h6.6" stroke="#e8903f" fill="#fbc45f" stroke-width="1" /><rect x="949.8" y="305.9" width="10.2" height="10.2" stroke="#444" fill="#fff" stroke-width="1.1" rx="0"/><path d="M950.4 315.4v-2.4l2.8-2.4l1.8 1.4l2.4-2.6l2 2.2v3.8z" stroke="#3a86d0" fill="#58a4e8" stroke-width="0.4" /><circle cx="952.6" cy="308.6" r="0.9" stroke="none" fill="#f0a040" stroke-width="0"/></svg>
<svg style="left:942.50px;top:330.00px;overflow:visible;" width="18.00" height="18.00" viewBox="942.5 330 18 18"><circle cx="951.3" cy="339" r="8" stroke="#555" fill="#fff" stroke-width="1.2"/><path d="M955.6 334.8l-2.4 6.2l-6.2 2.4l2.4-6.2z" stroke="#2f7fcc" fill="#4a9be0" stroke-width="0.6" /><circle cx="951.3" cy="339.1" r="1" stroke="none" fill="#fff" stroke-width="0"/></svg>
<svg style="left:943.00px;top:359.00px;overflow:visible;" width="19.00" height="26.00" viewBox="943 359 19 26"><text x="943.6" y="378.2" font-size="25" fill="#3a8ad6" font-weight="normal" font-style="italic" text-anchor="start" font-family="Liberation Serif, sans-serif">f</text><text x="951" y="378.6" font-size="18.5" fill="#3a8ad6" font-weight="normal" font-style="italic" text-anchor="start" font-family="Liberation Serif, sans-serif">x</text></svg>
<svg style="left:544.50px;top:415.00px;overflow:visible;" width="15.00" height="15.00" viewBox="544.5 415 15 15"><path d="M551.6 415.8c-3.8 0-6.6 2.8-6.6 6.6c0 3.6 2.8 6.6 6.4 6.6c1.4 0 1.8-.8 1.6-1.8c-.4-1.4.2-2.4 1.8-2.4h1.6c1.6 0 2.6-1.2 2.6-2.8c0-3.4-3.2-6.2-7.400-6.200z" stroke="#444" fill="#fff" stroke-width="1.0" /><circle cx="548.2" cy="420.2" r="0.8" stroke="#444" fill="none" stroke-width="0.7"/><circle cx="551.4" cy="418.4" r="0.8" stroke="#444" fill="none" stroke-width="0.7"/><circle cx="554.8" cy="420" r="0.8" stroke="#444" fill="none" stroke-width="0.7"/><circle cx="548" cy="424" r="0.8" stroke="#444" fill="none" stroke-width="0.7"/></svg>
<span class="t" id="t130" style="top:573.60px;font-size:17.3px;line-height:22px;color:rgba(150,150,150,0.52);letter-spacing:-0.049px;left:826.60px;">Attiva Windows</span>
<span class="t" id="t131" style="top:597.90px;font-size:12.4px;line-height:16px;color:rgba(150,150,150,0.52);letter-spacing:0.113px;left:826.60px;">Passa a Impostazioni per attivare Windows.</span>
</div></body></html>
